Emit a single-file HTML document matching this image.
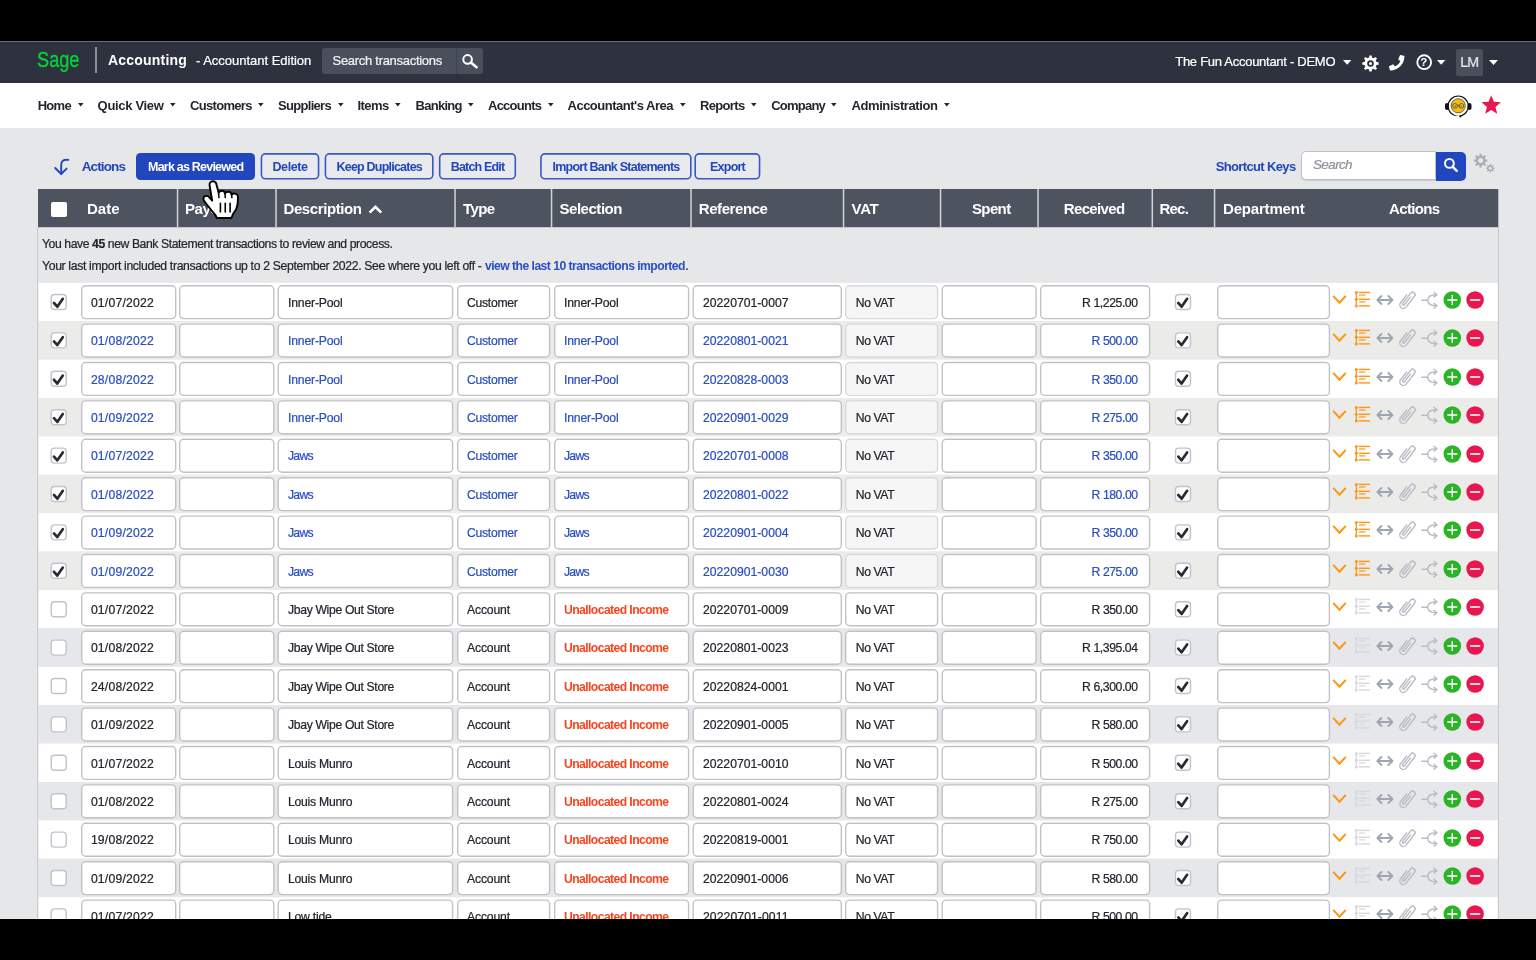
<!DOCTYPE html><html><head><meta charset="utf-8"><title>Sage Accounting - Bank Statements</title><style>
html,body{margin:0;padding:0}body{width:1536px;height:960px;background:#000;position:relative;overflow:hidden;font-family:"Liberation Sans",sans-serif}
.t{position:absolute;white-space:nowrap;line-height:1;margin:0;padding:0}
svg{position:absolute;overflow:visible}
</style></head><body><div style="position:absolute;left:0;top:0;width:1536px;height:960px;will-change:transform">
<div style="position:absolute;left:0.00px;top:41.00px;width:1536.00px;height:1.20px;background:#6d7078"></div>
<div style="position:absolute;left:0.00px;top:42.00px;width:1536.00px;height:41.00px;background:#2e323e"></div>
<div style="position:absolute;left:0.00px;top:83.00px;width:1536.00px;height:44.60px;background:#fff"></div>
<div style="position:absolute;left:0.00px;top:127.60px;width:1536.00px;height:791.40px;background:#e6e7e9"></div>
<div style="position:absolute;left:95.00px;top:47.00px;width:2.00px;height:26.00px;background:#8b8e96"></div>
<div style="position:absolute;left:321.75px;top:48.00px;width:161.25px;height:25.80px;background:#4a4f5c;border-radius:3px"></div>
<div style="position:absolute;left:456.00px;top:48.00px;width:1.00px;height:25.80px;background:#3f4350"></div>
<svg style="left:461px;top:53px" width="18" height="16" viewBox="0 0 18 16"><circle cx="6.6" cy="6.4" r="4.3" fill="none" stroke="#fff" stroke-width="2"/><path d="M9.9 9.6 L15.6 14.2" stroke="#fff" stroke-width="2.6" stroke-linecap="round"/></svg>
<svg style="left:1342.5px;top:59.6px" width="8.4" height="4.7" viewBox="0 0 8.4 4.7"><path d="M0 0 H8.4 L4.2 4.7 Z" fill="#fff"/></svg>
<svg style="left:1362px;top:54.5px" width="17" height="17" viewBox="0 0 17 17"><path d="M14.43 7.08 L16.62 7.34 L16.62 9.66 L14.43 9.92 L13.70 11.69 L15.06 13.42 L13.42 15.06 L11.69 13.70 L9.92 14.43 L9.66 16.62 L7.34 16.62 L7.08 14.43 L5.31 13.70 L3.58 15.06 L1.94 13.42 L3.30 11.69 L2.57 9.92 L0.38 9.66 L0.38 7.34 L2.57 7.08 L3.30 5.31 L1.94 3.58 L3.58 1.94 L5.31 3.30 L7.08 2.57 L7.34 0.38 L9.66 0.38 L9.92 2.57 L11.69 3.30 L13.42 1.94 L15.06 3.58 L13.70 5.31Z" fill="#fff"/><circle cx="8.5" cy="8.5" r="3.3" fill="#2e323e"/><circle cx="8.5" cy="8.5" r="1.5" fill="#fff"/></svg>
<svg style="left:1388.8px;top:55px" width="15.4" height="15.4" viewBox="0 0 512 512"><path fill="#fff" d="M497.4 361.8l-112-48a24 24 0 0 0-28 6.9l-49.6 60.6A370.7 370.7 0 0 1 130.6 204.1l60.6-49.6a23.9 23.9 0 0 0 6.9-28l-48-112A24.2 24.2 0 0 0 122.6.6l-104 24A24 24 0 0 0 0 48c0 256.5 207.9 464 464 464a24 24 0 0 0 23.4-18.6l24-104a24.3 24.3 0 0 0-14-27.6z" transform="translate(512 0) scale(-1 1)"/></svg>
<svg style="left:1415.5px;top:54px" width="16.4" height="16.4" viewBox="0 0 16.4 16.4"><circle cx="8.2" cy="8.2" r="6.9" fill="none" stroke="#fff" stroke-width="1.9"/></svg>
<svg style="left:1436.8px;top:59.6px" width="8.4" height="4.7" viewBox="0 0 8.4 4.7"><path d="M0 0 H8.4 L4.2 4.7 Z" fill="#fff"/></svg>
<div style="position:absolute;left:1455.75px;top:48.75px;width:27.00px;height:26.75px;background:#4b4f5b;border-radius:2px"></div>
<svg style="left:1489.4px;top:59.6px" width="9" height="4.9" viewBox="0 0 9 4.9"><path d="M0 0 H9 L4.5 4.9 Z" fill="#fff"/></svg>
<svg style="left:78px;top:102.6px" width="5.6" height="3.4" viewBox="0 0 5.6 3.4"><path d="M0 0 H5.6 L2.8 3.4 Z" fill="#23262e"/></svg>
<svg style="left:170px;top:102.6px" width="5.6" height="3.4" viewBox="0 0 5.6 3.4"><path d="M0 0 H5.6 L2.8 3.4 Z" fill="#23262e"/></svg>
<svg style="left:258px;top:102.6px" width="5.6" height="3.4" viewBox="0 0 5.6 3.4"><path d="M0 0 H5.6 L2.8 3.4 Z" fill="#23262e"/></svg>
<svg style="left:337.5px;top:102.6px" width="5.6" height="3.4" viewBox="0 0 5.6 3.4"><path d="M0 0 H5.6 L2.8 3.4 Z" fill="#23262e"/></svg>
<svg style="left:395px;top:102.6px" width="5.6" height="3.4" viewBox="0 0 5.6 3.4"><path d="M0 0 H5.6 L2.8 3.4 Z" fill="#23262e"/></svg>
<svg style="left:468px;top:102.6px" width="5.6" height="3.4" viewBox="0 0 5.6 3.4"><path d="M0 0 H5.6 L2.8 3.4 Z" fill="#23262e"/></svg>
<svg style="left:548px;top:102.6px" width="5.6" height="3.4" viewBox="0 0 5.6 3.4"><path d="M0 0 H5.6 L2.8 3.4 Z" fill="#23262e"/></svg>
<svg style="left:679.5px;top:102.6px" width="5.6" height="3.4" viewBox="0 0 5.6 3.4"><path d="M0 0 H5.6 L2.8 3.4 Z" fill="#23262e"/></svg>
<svg style="left:751px;top:102.6px" width="5.6" height="3.4" viewBox="0 0 5.6 3.4"><path d="M0 0 H5.6 L2.8 3.4 Z" fill="#23262e"/></svg>
<svg style="left:831px;top:102.6px" width="5.6" height="3.4" viewBox="0 0 5.6 3.4"><path d="M0 0 H5.6 L2.8 3.4 Z" fill="#23262e"/></svg>
<svg style="left:943.5px;top:102.6px" width="5.6" height="3.4" viewBox="0 0 5.6 3.4"><path d="M0 0 H5.6 L2.8 3.4 Z" fill="#23262e"/></svg>
<svg style="left:1444px;top:93.5px" width="29" height="24" viewBox="1444 93.5 29 24">
<circle cx="1458.2" cy="105.6" r="10.1" fill="#fff" stroke="#111" stroke-width="1.2"/>
<rect x="1445" y="102.6" width="3.8" height="6.8" rx="1.9" fill="#111"/><rect x="1467.7" y="102.6" width="3.8" height="6.8" rx="1.9" fill="#111"/>
<path d="M1447.2 111.4 A10.1 10.1 0 0 0 1460 115.6" fill="none" stroke="#fff" stroke-width="2.2"/>
<circle cx="1458.2" cy="105.3" r="7.1" fill="#f6bd0c" stroke="#3a3320" stroke-width="0.7"/>
<circle cx="1455" cy="105.4" r="2.3" fill="#f9cf3c" stroke="#3a3a44" stroke-width="0.8"/><circle cx="1461.4" cy="105.4" r="2.3" fill="#f9cf3c" stroke="#3a3a44" stroke-width="0.8"/>
<path d="M1457.3 105.2 H1459.1" stroke="#3a3a44" stroke-width="0.8"/><circle cx="1455.2" cy="105.5" r="0.7" fill="#333"/><circle cx="1461.2" cy="105.5" r="0.7" fill="#333"/>
<circle cx="1460.3" cy="115.8" r="1.1" fill="#111"/>
</svg>
<svg style="left:0;top:0" width="1536" height="130"><path d="M1491.20 95.30 L1493.85 101.86 L1500.90 102.35 L1495.48 106.89 L1497.20 113.75 L1491.20 110.00 L1485.20 113.75 L1486.92 106.89 L1481.50 102.35 L1488.55 101.86Z" fill="#e8174f"/></svg>
<svg style="left:52.2px;top:157px" width="19" height="20" viewBox="0 0 19 20"><path d="M16.4 2.9 C10.6 2.3 9.2 4.8 9.2 8 V16.6" fill="none" stroke="#2146bd" stroke-width="1.9" stroke-linecap="round"/><path d="M3.2 11 L9.2 17 L14.6 11.6" fill="none" stroke="#2146bd" stroke-width="1.9" stroke-linecap="round" stroke-linejoin="round"/></svg>
<div style="position:absolute;left:136.00px;top:152.80px;width:119.00px;height:27.00px;background:#2146bd;border-radius:4.5px"></div>
<svg style="left:0;top:0" width="1536" height="200"><rect x="261.45" y="153.85" width="57.10" height="24.90" rx="4" fill="#e9eaed" stroke="#3856c6" stroke-width="1.6"/></svg>
<svg style="left:0;top:0" width="1536" height="200"><rect x="325.45" y="153.85" width="107.35" height="24.90" rx="4" fill="#e9eaed" stroke="#3856c6" stroke-width="1.6"/></svg>
<svg style="left:0;top:0" width="1536" height="200"><rect x="439.70" y="153.85" width="75.60" height="24.90" rx="4" fill="#e9eaed" stroke="#3856c6" stroke-width="1.6"/></svg>
<svg style="left:0;top:0" width="1536" height="200"><rect x="540.95" y="153.85" width="149.85" height="24.90" rx="4" fill="#e9eaed" stroke="#3856c6" stroke-width="1.6"/></svg>
<svg style="left:0;top:0" width="1536" height="200"><rect x="695.20" y="153.85" width="64.35" height="24.90" rx="4" fill="#e9eaed" stroke="#3856c6" stroke-width="1.6"/></svg>
<div style="position:absolute;left:1301.30px;top:151.30px;width:135.00px;height:28.60px;box-sizing:border-box;background:#fff;border:1px solid #bfc0c4;border-radius:5px 0 0 5px;box-shadow:0 1px 1px rgba(0,0,0,.12)"></div>
<div style="position:absolute;left:1435.75px;top:152.10px;width:29.75px;height:28.70px;background:#2146bd;border-radius:0 5px 5px 0"></div>
<svg style="left:1442.5px;top:157.4px" width="16" height="16" viewBox="0 0 16 16"><circle cx="6.4" cy="6.4" r="4.4" fill="none" stroke="#fff" stroke-width="2"/><path d="M9.8 9.8 L13.8 13.8" stroke="#fff" stroke-width="2.4" stroke-linecap="round"/></svg>
<svg style="left:1473px;top:152.7px" width="22" height="21" viewBox="0 0 22 21"><path d="M12.46 6.43 L14.43 6.63 L14.43 8.57 L12.46 8.77 L11.86 10.21 L13.12 11.74 L11.74 13.12 L10.21 11.86 L8.77 12.46 L8.57 14.43 L6.63 14.43 L6.43 12.46 L4.99 11.86 L3.46 13.12 L2.08 11.74 L3.34 10.21 L2.74 8.77 L0.77 8.57 L0.77 6.63 L2.74 6.43 L3.34 4.99 L2.08 3.46 L3.46 2.08 L4.99 3.34 L6.43 2.74 L6.63 0.77 L8.57 0.77 L8.77 2.74 L10.21 3.34 L11.74 2.08 L13.12 3.46 L11.86 4.99Z" fill="#a9adb5"/><circle cx="7.6" cy="7.6" r="2.5" fill="#e6e7e9"/><path d="M20.22 14.50 L21.56 14.59 L21.56 15.81 L20.22 15.90 L19.86 16.77 L20.74 17.78 L19.88 18.64 L18.87 17.76 L18.00 18.12 L17.91 19.46 L16.69 19.46 L16.60 18.12 L15.73 17.76 L14.72 18.64 L13.86 17.78 L14.74 16.77 L14.38 15.90 L13.04 15.81 L13.04 14.59 L14.38 14.50 L14.74 13.63 L13.86 12.62 L14.72 11.76 L15.73 12.64 L16.60 12.28 L16.69 10.94 L17.91 10.94 L18.00 12.28 L18.87 12.64 L19.88 11.76 L20.74 12.62 L19.86 13.63Z" fill="#a9adb5"/><circle cx="17.3" cy="15.2" r="1.5" fill="#e6e7e9"/></svg>
<svg style="left:0;top:0" width="1536" height="240"><rect x="38" y="189" width="1460.30" height="38.2" fill="#4e5360"/><rect x="176.80" y="189" width="1.5" height="38" fill="#d2d4d9"/><rect x="275.30" y="189" width="1.5" height="38" fill="#d2d4d9"/><rect x="454.30" y="189" width="1.5" height="38" fill="#d2d4d9"/><rect x="550.80" y="189" width="1.5" height="38" fill="#d2d4d9"/><rect x="690.30" y="189" width="1.5" height="38" fill="#d2d4d9"/><rect x="842.80" y="189" width="1.5" height="38" fill="#d2d4d9"/><rect x="939.80" y="189" width="1.5" height="38" fill="#d2d4d9"/><rect x="1037.30" y="189" width="1.5" height="38" fill="#d2d4d9"/><rect x="1151.55" y="189" width="1.5" height="38" fill="#d2d4d9"/><rect x="1213.80" y="189" width="1.5" height="38" fill="#d2d4d9"/></svg>
<div style="position:absolute;left:37.20px;top:227.00px;width:1.20px;height:692.00px;background:#cbccd1"></div>
<div style="position:absolute;left:1497.70px;top:227.00px;width:1.20px;height:692.00px;background:#c5c7cc"></div>
<div style="position:absolute;left:51.00px;top:201.50px;width:15.50px;height:15.50px;background:#fff;border-radius:2px"></div>
<svg style="left:367px;top:203px" width="17" height="12" viewBox="0 0 17 12"><path d="M2.6 9.6 L8.4 3.8 L14.2 9.6" fill="none" stroke="#fff" stroke-width="2.7"/></svg>
<svg style="left:0;top:0" width="1536" height="960" viewBox="0 0 1536 960"><rect x="38.70" y="282.80" width="1459.00" height="38.40" fill="#fff"/><rect x="81.70" y="285.70" width="94.00" height="32.90" rx="4" fill="#fff" stroke="#c2c2c4" stroke-width="1.4"/><rect x="179.70" y="285.70" width="94.15" height="32.90" rx="4" fill="#fff" stroke="#c2c2c4" stroke-width="1.4"/><rect x="278.20" y="285.70" width="174.40" height="32.90" rx="4" fill="#fff" stroke="#c2c2c4" stroke-width="1.4"/><rect x="457.70" y="285.70" width="91.90" height="32.90" rx="4" fill="#fff" stroke="#c2c2c4" stroke-width="1.4"/><rect x="554.70" y="285.70" width="133.90" height="32.90" rx="4" fill="#fff" stroke="#c2c2c4" stroke-width="1.4"/><rect x="693.20" y="285.70" width="148.15" height="32.90" rx="4" fill="#fff" stroke="#c2c2c4" stroke-width="1.4"/><rect x="845.70" y="285.70" width="91.90" height="32.90" rx="4" fill="#f6f6f6" stroke="#d8d9db" stroke-width="1.4"/><rect x="942.20" y="285.70" width="93.90" height="32.90" rx="4" fill="#fff" stroke="#c2c2c4" stroke-width="1.4"/><rect x="1040.70" y="285.70" width="108.90" height="32.90" rx="4" fill="#fff" stroke="#c2c2c4" stroke-width="1.4"/><rect x="1217.70" y="285.70" width="111.70" height="32.90" rx="4" fill="#fff" stroke="#c2c2c4" stroke-width="1.4"/><rect x="51.20" y="294.50" width="15.00" height="15.00" rx="3.3" fill="#fff" stroke="#c0c3cb" stroke-width="1.4"/><path transform="translate(50.5 293.80)" d="M3.5 9.2 L6.8 12.9 L12.3 5" fill="none" stroke="#2a2b30" stroke-width="2.7" stroke-linejoin="round" stroke-linecap="round"/><rect x="1175.50" y="294.50" width="15.00" height="15.00" rx="3.3" fill="#fff" stroke="#c0c3cb" stroke-width="1.4"/><path transform="translate(1174.8 293.80)" d="M3.5 9.2 L6.8 12.9 L12.3 5" fill="none" stroke="#2a2b30" stroke-width="2.7" stroke-linejoin="round" stroke-linecap="round"/><rect x="38.70" y="321.20" width="1459.00" height="38.40" fill="#ebebe9"/><rect x="81.70" y="324.10" width="94.00" height="32.90" rx="4" fill="#fff" stroke="#c2c2c4" stroke-width="1.4"/><rect x="179.70" y="324.10" width="94.15" height="32.90" rx="4" fill="#fff" stroke="#c2c2c4" stroke-width="1.4"/><rect x="278.20" y="324.10" width="174.40" height="32.90" rx="4" fill="#fff" stroke="#c2c2c4" stroke-width="1.4"/><rect x="457.70" y="324.10" width="91.90" height="32.90" rx="4" fill="#fff" stroke="#c2c2c4" stroke-width="1.4"/><rect x="554.70" y="324.10" width="133.90" height="32.90" rx="4" fill="#fff" stroke="#c2c2c4" stroke-width="1.4"/><rect x="693.20" y="324.10" width="148.15" height="32.90" rx="4" fill="#fff" stroke="#c2c2c4" stroke-width="1.4"/><rect x="845.70" y="324.10" width="91.90" height="32.90" rx="4" fill="#f6f6f6" stroke="#d8d9db" stroke-width="1.4"/><rect x="942.20" y="324.10" width="93.90" height="32.90" rx="4" fill="#fff" stroke="#c2c2c4" stroke-width="1.4"/><rect x="1040.70" y="324.10" width="108.90" height="32.90" rx="4" fill="#fff" stroke="#c2c2c4" stroke-width="1.4"/><rect x="1217.70" y="324.10" width="111.70" height="32.90" rx="4" fill="#fff" stroke="#c2c2c4" stroke-width="1.4"/><rect x="51.20" y="332.90" width="15.00" height="15.00" rx="3.3" fill="#fff" stroke="#c0c3cb" stroke-width="1.4"/><path transform="translate(50.5 332.20)" d="M3.5 9.2 L6.8 12.9 L12.3 5" fill="none" stroke="#2a2b30" stroke-width="2.7" stroke-linejoin="round" stroke-linecap="round"/><rect x="1175.50" y="332.90" width="15.00" height="15.00" rx="3.3" fill="#fff" stroke="#c0c3cb" stroke-width="1.4"/><path transform="translate(1174.8 332.20)" d="M3.5 9.2 L6.8 12.9 L12.3 5" fill="none" stroke="#2a2b30" stroke-width="2.7" stroke-linejoin="round" stroke-linecap="round"/><rect x="38.70" y="359.60" width="1459.00" height="38.40" fill="#fff"/><rect x="81.70" y="362.50" width="94.00" height="32.90" rx="4" fill="#fff" stroke="#c2c2c4" stroke-width="1.4"/><rect x="179.70" y="362.50" width="94.15" height="32.90" rx="4" fill="#fff" stroke="#c2c2c4" stroke-width="1.4"/><rect x="278.20" y="362.50" width="174.40" height="32.90" rx="4" fill="#fff" stroke="#c2c2c4" stroke-width="1.4"/><rect x="457.70" y="362.50" width="91.90" height="32.90" rx="4" fill="#fff" stroke="#c2c2c4" stroke-width="1.4"/><rect x="554.70" y="362.50" width="133.90" height="32.90" rx="4" fill="#fff" stroke="#c2c2c4" stroke-width="1.4"/><rect x="693.20" y="362.50" width="148.15" height="32.90" rx="4" fill="#fff" stroke="#c2c2c4" stroke-width="1.4"/><rect x="845.70" y="362.50" width="91.90" height="32.90" rx="4" fill="#f6f6f6" stroke="#d8d9db" stroke-width="1.4"/><rect x="942.20" y="362.50" width="93.90" height="32.90" rx="4" fill="#fff" stroke="#c2c2c4" stroke-width="1.4"/><rect x="1040.70" y="362.50" width="108.90" height="32.90" rx="4" fill="#fff" stroke="#c2c2c4" stroke-width="1.4"/><rect x="1217.70" y="362.50" width="111.70" height="32.90" rx="4" fill="#fff" stroke="#c2c2c4" stroke-width="1.4"/><rect x="51.20" y="371.30" width="15.00" height="15.00" rx="3.3" fill="#fff" stroke="#c0c3cb" stroke-width="1.4"/><path transform="translate(50.5 370.60)" d="M3.5 9.2 L6.8 12.9 L12.3 5" fill="none" stroke="#2a2b30" stroke-width="2.7" stroke-linejoin="round" stroke-linecap="round"/><rect x="1175.50" y="371.30" width="15.00" height="15.00" rx="3.3" fill="#fff" stroke="#c0c3cb" stroke-width="1.4"/><path transform="translate(1174.8 370.60)" d="M3.5 9.2 L6.8 12.9 L12.3 5" fill="none" stroke="#2a2b30" stroke-width="2.7" stroke-linejoin="round" stroke-linecap="round"/><rect x="38.70" y="398.00" width="1459.00" height="38.40" fill="#ebebe9"/><rect x="81.70" y="400.90" width="94.00" height="32.90" rx="4" fill="#fff" stroke="#c2c2c4" stroke-width="1.4"/><rect x="179.70" y="400.90" width="94.15" height="32.90" rx="4" fill="#fff" stroke="#c2c2c4" stroke-width="1.4"/><rect x="278.20" y="400.90" width="174.40" height="32.90" rx="4" fill="#fff" stroke="#c2c2c4" stroke-width="1.4"/><rect x="457.70" y="400.90" width="91.90" height="32.90" rx="4" fill="#fff" stroke="#c2c2c4" stroke-width="1.4"/><rect x="554.70" y="400.90" width="133.90" height="32.90" rx="4" fill="#fff" stroke="#c2c2c4" stroke-width="1.4"/><rect x="693.20" y="400.90" width="148.15" height="32.90" rx="4" fill="#fff" stroke="#c2c2c4" stroke-width="1.4"/><rect x="845.70" y="400.90" width="91.90" height="32.90" rx="4" fill="#f6f6f6" stroke="#d8d9db" stroke-width="1.4"/><rect x="942.20" y="400.90" width="93.90" height="32.90" rx="4" fill="#fff" stroke="#c2c2c4" stroke-width="1.4"/><rect x="1040.70" y="400.90" width="108.90" height="32.90" rx="4" fill="#fff" stroke="#c2c2c4" stroke-width="1.4"/><rect x="1217.70" y="400.90" width="111.70" height="32.90" rx="4" fill="#fff" stroke="#c2c2c4" stroke-width="1.4"/><rect x="51.20" y="409.70" width="15.00" height="15.00" rx="3.3" fill="#fff" stroke="#c0c3cb" stroke-width="1.4"/><path transform="translate(50.5 409.00)" d="M3.5 9.2 L6.8 12.9 L12.3 5" fill="none" stroke="#2a2b30" stroke-width="2.7" stroke-linejoin="round" stroke-linecap="round"/><rect x="1175.50" y="409.70" width="15.00" height="15.00" rx="3.3" fill="#fff" stroke="#c0c3cb" stroke-width="1.4"/><path transform="translate(1174.8 409.00)" d="M3.5 9.2 L6.8 12.9 L12.3 5" fill="none" stroke="#2a2b30" stroke-width="2.7" stroke-linejoin="round" stroke-linecap="round"/><rect x="38.70" y="436.40" width="1459.00" height="38.40" fill="#fff"/><rect x="81.70" y="439.30" width="94.00" height="32.90" rx="4" fill="#fff" stroke="#c2c2c4" stroke-width="1.4"/><rect x="179.70" y="439.30" width="94.15" height="32.90" rx="4" fill="#fff" stroke="#c2c2c4" stroke-width="1.4"/><rect x="278.20" y="439.30" width="174.40" height="32.90" rx="4" fill="#fff" stroke="#c2c2c4" stroke-width="1.4"/><rect x="457.70" y="439.30" width="91.90" height="32.90" rx="4" fill="#fff" stroke="#c2c2c4" stroke-width="1.4"/><rect x="554.70" y="439.30" width="133.90" height="32.90" rx="4" fill="#fff" stroke="#c2c2c4" stroke-width="1.4"/><rect x="693.20" y="439.30" width="148.15" height="32.90" rx="4" fill="#fff" stroke="#c2c2c4" stroke-width="1.4"/><rect x="845.70" y="439.30" width="91.90" height="32.90" rx="4" fill="#f6f6f6" stroke="#d8d9db" stroke-width="1.4"/><rect x="942.20" y="439.30" width="93.90" height="32.90" rx="4" fill="#fff" stroke="#c2c2c4" stroke-width="1.4"/><rect x="1040.70" y="439.30" width="108.90" height="32.90" rx="4" fill="#fff" stroke="#c2c2c4" stroke-width="1.4"/><rect x="1217.70" y="439.30" width="111.70" height="32.90" rx="4" fill="#fff" stroke="#c2c2c4" stroke-width="1.4"/><rect x="51.20" y="448.10" width="15.00" height="15.00" rx="3.3" fill="#fff" stroke="#c0c3cb" stroke-width="1.4"/><path transform="translate(50.5 447.40)" d="M3.5 9.2 L6.8 12.9 L12.3 5" fill="none" stroke="#2a2b30" stroke-width="2.7" stroke-linejoin="round" stroke-linecap="round"/><rect x="1175.50" y="448.10" width="15.00" height="15.00" rx="3.3" fill="#fff" stroke="#c0c3cb" stroke-width="1.4"/><path transform="translate(1174.8 447.40)" d="M3.5 9.2 L6.8 12.9 L12.3 5" fill="none" stroke="#2a2b30" stroke-width="2.7" stroke-linejoin="round" stroke-linecap="round"/><rect x="38.70" y="474.80" width="1459.00" height="38.40" fill="#ebebe9"/><rect x="81.70" y="477.70" width="94.00" height="32.90" rx="4" fill="#fff" stroke="#c2c2c4" stroke-width="1.4"/><rect x="179.70" y="477.70" width="94.15" height="32.90" rx="4" fill="#fff" stroke="#c2c2c4" stroke-width="1.4"/><rect x="278.20" y="477.70" width="174.40" height="32.90" rx="4" fill="#fff" stroke="#c2c2c4" stroke-width="1.4"/><rect x="457.70" y="477.70" width="91.90" height="32.90" rx="4" fill="#fff" stroke="#c2c2c4" stroke-width="1.4"/><rect x="554.70" y="477.70" width="133.90" height="32.90" rx="4" fill="#fff" stroke="#c2c2c4" stroke-width="1.4"/><rect x="693.20" y="477.70" width="148.15" height="32.90" rx="4" fill="#fff" stroke="#c2c2c4" stroke-width="1.4"/><rect x="845.70" y="477.70" width="91.90" height="32.90" rx="4" fill="#f6f6f6" stroke="#d8d9db" stroke-width="1.4"/><rect x="942.20" y="477.70" width="93.90" height="32.90" rx="4" fill="#fff" stroke="#c2c2c4" stroke-width="1.4"/><rect x="1040.70" y="477.70" width="108.90" height="32.90" rx="4" fill="#fff" stroke="#c2c2c4" stroke-width="1.4"/><rect x="1217.70" y="477.70" width="111.70" height="32.90" rx="4" fill="#fff" stroke="#c2c2c4" stroke-width="1.4"/><rect x="51.20" y="486.50" width="15.00" height="15.00" rx="3.3" fill="#fff" stroke="#c0c3cb" stroke-width="1.4"/><path transform="translate(50.5 485.80)" d="M3.5 9.2 L6.8 12.9 L12.3 5" fill="none" stroke="#2a2b30" stroke-width="2.7" stroke-linejoin="round" stroke-linecap="round"/><rect x="1175.50" y="486.50" width="15.00" height="15.00" rx="3.3" fill="#fff" stroke="#c0c3cb" stroke-width="1.4"/><path transform="translate(1174.8 485.80)" d="M3.5 9.2 L6.8 12.9 L12.3 5" fill="none" stroke="#2a2b30" stroke-width="2.7" stroke-linejoin="round" stroke-linecap="round"/><rect x="38.70" y="513.20" width="1459.00" height="38.40" fill="#fff"/><rect x="81.70" y="516.10" width="94.00" height="32.90" rx="4" fill="#fff" stroke="#c2c2c4" stroke-width="1.4"/><rect x="179.70" y="516.10" width="94.15" height="32.90" rx="4" fill="#fff" stroke="#c2c2c4" stroke-width="1.4"/><rect x="278.20" y="516.10" width="174.40" height="32.90" rx="4" fill="#fff" stroke="#c2c2c4" stroke-width="1.4"/><rect x="457.70" y="516.10" width="91.90" height="32.90" rx="4" fill="#fff" stroke="#c2c2c4" stroke-width="1.4"/><rect x="554.70" y="516.10" width="133.90" height="32.90" rx="4" fill="#fff" stroke="#c2c2c4" stroke-width="1.4"/><rect x="693.20" y="516.10" width="148.15" height="32.90" rx="4" fill="#fff" stroke="#c2c2c4" stroke-width="1.4"/><rect x="845.70" y="516.10" width="91.90" height="32.90" rx="4" fill="#f6f6f6" stroke="#d8d9db" stroke-width="1.4"/><rect x="942.20" y="516.10" width="93.90" height="32.90" rx="4" fill="#fff" stroke="#c2c2c4" stroke-width="1.4"/><rect x="1040.70" y="516.10" width="108.90" height="32.90" rx="4" fill="#fff" stroke="#c2c2c4" stroke-width="1.4"/><rect x="1217.70" y="516.10" width="111.70" height="32.90" rx="4" fill="#fff" stroke="#c2c2c4" stroke-width="1.4"/><rect x="51.20" y="524.90" width="15.00" height="15.00" rx="3.3" fill="#fff" stroke="#c0c3cb" stroke-width="1.4"/><path transform="translate(50.5 524.20)" d="M3.5 9.2 L6.8 12.9 L12.3 5" fill="none" stroke="#2a2b30" stroke-width="2.7" stroke-linejoin="round" stroke-linecap="round"/><rect x="1175.50" y="524.90" width="15.00" height="15.00" rx="3.3" fill="#fff" stroke="#c0c3cb" stroke-width="1.4"/><path transform="translate(1174.8 524.20)" d="M3.5 9.2 L6.8 12.9 L12.3 5" fill="none" stroke="#2a2b30" stroke-width="2.7" stroke-linejoin="round" stroke-linecap="round"/><rect x="38.70" y="551.60" width="1459.00" height="38.40" fill="#ebebe9"/><rect x="81.70" y="554.50" width="94.00" height="32.90" rx="4" fill="#fff" stroke="#c2c2c4" stroke-width="1.4"/><rect x="179.70" y="554.50" width="94.15" height="32.90" rx="4" fill="#fff" stroke="#c2c2c4" stroke-width="1.4"/><rect x="278.20" y="554.50" width="174.40" height="32.90" rx="4" fill="#fff" stroke="#c2c2c4" stroke-width="1.4"/><rect x="457.70" y="554.50" width="91.90" height="32.90" rx="4" fill="#fff" stroke="#c2c2c4" stroke-width="1.4"/><rect x="554.70" y="554.50" width="133.90" height="32.90" rx="4" fill="#fff" stroke="#c2c2c4" stroke-width="1.4"/><rect x="693.20" y="554.50" width="148.15" height="32.90" rx="4" fill="#fff" stroke="#c2c2c4" stroke-width="1.4"/><rect x="845.70" y="554.50" width="91.90" height="32.90" rx="4" fill="#f6f6f6" stroke="#d8d9db" stroke-width="1.4"/><rect x="942.20" y="554.50" width="93.90" height="32.90" rx="4" fill="#fff" stroke="#c2c2c4" stroke-width="1.4"/><rect x="1040.70" y="554.50" width="108.90" height="32.90" rx="4" fill="#fff" stroke="#c2c2c4" stroke-width="1.4"/><rect x="1217.70" y="554.50" width="111.70" height="32.90" rx="4" fill="#fff" stroke="#c2c2c4" stroke-width="1.4"/><rect x="51.20" y="563.30" width="15.00" height="15.00" rx="3.3" fill="#fff" stroke="#c0c3cb" stroke-width="1.4"/><path transform="translate(50.5 562.60)" d="M3.5 9.2 L6.8 12.9 L12.3 5" fill="none" stroke="#2a2b30" stroke-width="2.7" stroke-linejoin="round" stroke-linecap="round"/><rect x="1175.50" y="563.30" width="15.00" height="15.00" rx="3.3" fill="#fff" stroke="#c0c3cb" stroke-width="1.4"/><path transform="translate(1174.8 562.60)" d="M3.5 9.2 L6.8 12.9 L12.3 5" fill="none" stroke="#2a2b30" stroke-width="2.7" stroke-linejoin="round" stroke-linecap="round"/><rect x="38.70" y="590.00" width="1459.00" height="38.40" fill="#fff"/><rect x="81.70" y="592.90" width="94.00" height="32.90" rx="4" fill="#fff" stroke="#c2c2c4" stroke-width="1.4"/><rect x="179.70" y="592.90" width="94.15" height="32.90" rx="4" fill="#fff" stroke="#c2c2c4" stroke-width="1.4"/><rect x="278.20" y="592.90" width="174.40" height="32.90" rx="4" fill="#fff" stroke="#c2c2c4" stroke-width="1.4"/><rect x="457.70" y="592.90" width="91.90" height="32.90" rx="4" fill="#fff" stroke="#c2c2c4" stroke-width="1.4"/><rect x="554.70" y="592.90" width="133.90" height="32.90" rx="4" fill="#fff" stroke="#c2c2c4" stroke-width="1.4"/><rect x="693.20" y="592.90" width="148.15" height="32.90" rx="4" fill="#fff" stroke="#c2c2c4" stroke-width="1.4"/><rect x="845.70" y="592.90" width="91.90" height="32.90" rx="4" fill="#fff" stroke="#c2c2c4" stroke-width="1.4"/><rect x="942.20" y="592.90" width="93.90" height="32.90" rx="4" fill="#fff" stroke="#c2c2c4" stroke-width="1.4"/><rect x="1040.70" y="592.90" width="108.90" height="32.90" rx="4" fill="#fff" stroke="#c2c2c4" stroke-width="1.4"/><rect x="1217.70" y="592.90" width="111.70" height="32.90" rx="4" fill="#fff" stroke="#c2c2c4" stroke-width="1.4"/><rect x="51.20" y="601.70" width="15.00" height="15.00" rx="3.3" fill="#fff" stroke="#c0c3cb" stroke-width="1.4"/><rect x="1175.50" y="601.70" width="15.00" height="15.00" rx="3.3" fill="#fff" stroke="#c0c3cb" stroke-width="1.4"/><path transform="translate(1174.8 601.00)" d="M3.5 9.2 L6.8 12.9 L12.3 5" fill="none" stroke="#2a2b30" stroke-width="2.7" stroke-linejoin="round" stroke-linecap="round"/><rect x="38.70" y="628.40" width="1459.00" height="38.40" fill="#e5e7ea"/><rect x="81.70" y="631.30" width="94.00" height="32.90" rx="4" fill="#fff" stroke="#c2c2c4" stroke-width="1.4"/><rect x="179.70" y="631.30" width="94.15" height="32.90" rx="4" fill="#fff" stroke="#c2c2c4" stroke-width="1.4"/><rect x="278.20" y="631.30" width="174.40" height="32.90" rx="4" fill="#fff" stroke="#c2c2c4" stroke-width="1.4"/><rect x="457.70" y="631.30" width="91.90" height="32.90" rx="4" fill="#fff" stroke="#c2c2c4" stroke-width="1.4"/><rect x="554.70" y="631.30" width="133.90" height="32.90" rx="4" fill="#fff" stroke="#c2c2c4" stroke-width="1.4"/><rect x="693.20" y="631.30" width="148.15" height="32.90" rx="4" fill="#fff" stroke="#c2c2c4" stroke-width="1.4"/><rect x="845.70" y="631.30" width="91.90" height="32.90" rx="4" fill="#fff" stroke="#c2c2c4" stroke-width="1.4"/><rect x="942.20" y="631.30" width="93.90" height="32.90" rx="4" fill="#fff" stroke="#c2c2c4" stroke-width="1.4"/><rect x="1040.70" y="631.30" width="108.90" height="32.90" rx="4" fill="#fff" stroke="#c2c2c4" stroke-width="1.4"/><rect x="1217.70" y="631.30" width="111.70" height="32.90" rx="4" fill="#fff" stroke="#c2c2c4" stroke-width="1.4"/><rect x="51.20" y="640.10" width="15.00" height="15.00" rx="3.3" fill="#fff" stroke="#c0c3cb" stroke-width="1.4"/><rect x="1175.50" y="640.10" width="15.00" height="15.00" rx="3.3" fill="#fff" stroke="#c0c3cb" stroke-width="1.4"/><path transform="translate(1174.8 639.40)" d="M3.5 9.2 L6.8 12.9 L12.3 5" fill="none" stroke="#2a2b30" stroke-width="2.7" stroke-linejoin="round" stroke-linecap="round"/><rect x="38.70" y="666.80" width="1459.00" height="38.40" fill="#fff"/><rect x="81.70" y="669.70" width="94.00" height="32.90" rx="4" fill="#fff" stroke="#c2c2c4" stroke-width="1.4"/><rect x="179.70" y="669.70" width="94.15" height="32.90" rx="4" fill="#fff" stroke="#c2c2c4" stroke-width="1.4"/><rect x="278.20" y="669.70" width="174.40" height="32.90" rx="4" fill="#fff" stroke="#c2c2c4" stroke-width="1.4"/><rect x="457.70" y="669.70" width="91.90" height="32.90" rx="4" fill="#fff" stroke="#c2c2c4" stroke-width="1.4"/><rect x="554.70" y="669.70" width="133.90" height="32.90" rx="4" fill="#fff" stroke="#c2c2c4" stroke-width="1.4"/><rect x="693.20" y="669.70" width="148.15" height="32.90" rx="4" fill="#fff" stroke="#c2c2c4" stroke-width="1.4"/><rect x="845.70" y="669.70" width="91.90" height="32.90" rx="4" fill="#fff" stroke="#c2c2c4" stroke-width="1.4"/><rect x="942.20" y="669.70" width="93.90" height="32.90" rx="4" fill="#fff" stroke="#c2c2c4" stroke-width="1.4"/><rect x="1040.70" y="669.70" width="108.90" height="32.90" rx="4" fill="#fff" stroke="#c2c2c4" stroke-width="1.4"/><rect x="1217.70" y="669.70" width="111.70" height="32.90" rx="4" fill="#fff" stroke="#c2c2c4" stroke-width="1.4"/><rect x="51.20" y="678.50" width="15.00" height="15.00" rx="3.3" fill="#fff" stroke="#c0c3cb" stroke-width="1.4"/><rect x="1175.50" y="678.50" width="15.00" height="15.00" rx="3.3" fill="#fff" stroke="#c0c3cb" stroke-width="1.4"/><path transform="translate(1174.8 677.80)" d="M3.5 9.2 L6.8 12.9 L12.3 5" fill="none" stroke="#2a2b30" stroke-width="2.7" stroke-linejoin="round" stroke-linecap="round"/><rect x="38.70" y="705.20" width="1459.00" height="38.40" fill="#e5e7ea"/><rect x="81.70" y="708.10" width="94.00" height="32.90" rx="4" fill="#fff" stroke="#c2c2c4" stroke-width="1.4"/><rect x="179.70" y="708.10" width="94.15" height="32.90" rx="4" fill="#fff" stroke="#c2c2c4" stroke-width="1.4"/><rect x="278.20" y="708.10" width="174.40" height="32.90" rx="4" fill="#fff" stroke="#c2c2c4" stroke-width="1.4"/><rect x="457.70" y="708.10" width="91.90" height="32.90" rx="4" fill="#fff" stroke="#c2c2c4" stroke-width="1.4"/><rect x="554.70" y="708.10" width="133.90" height="32.90" rx="4" fill="#fff" stroke="#c2c2c4" stroke-width="1.4"/><rect x="693.20" y="708.10" width="148.15" height="32.90" rx="4" fill="#fff" stroke="#c2c2c4" stroke-width="1.4"/><rect x="845.70" y="708.10" width="91.90" height="32.90" rx="4" fill="#fff" stroke="#c2c2c4" stroke-width="1.4"/><rect x="942.20" y="708.10" width="93.90" height="32.90" rx="4" fill="#fff" stroke="#c2c2c4" stroke-width="1.4"/><rect x="1040.70" y="708.10" width="108.90" height="32.90" rx="4" fill="#fff" stroke="#c2c2c4" stroke-width="1.4"/><rect x="1217.70" y="708.10" width="111.70" height="32.90" rx="4" fill="#fff" stroke="#c2c2c4" stroke-width="1.4"/><rect x="51.20" y="716.90" width="15.00" height="15.00" rx="3.3" fill="#fff" stroke="#c0c3cb" stroke-width="1.4"/><rect x="1175.50" y="716.90" width="15.00" height="15.00" rx="3.3" fill="#fff" stroke="#c0c3cb" stroke-width="1.4"/><path transform="translate(1174.8 716.20)" d="M3.5 9.2 L6.8 12.9 L12.3 5" fill="none" stroke="#2a2b30" stroke-width="2.7" stroke-linejoin="round" stroke-linecap="round"/><rect x="38.70" y="743.60" width="1459.00" height="38.40" fill="#fff"/><rect x="81.70" y="746.50" width="94.00" height="32.90" rx="4" fill="#fff" stroke="#c2c2c4" stroke-width="1.4"/><rect x="179.70" y="746.50" width="94.15" height="32.90" rx="4" fill="#fff" stroke="#c2c2c4" stroke-width="1.4"/><rect x="278.20" y="746.50" width="174.40" height="32.90" rx="4" fill="#fff" stroke="#c2c2c4" stroke-width="1.4"/><rect x="457.70" y="746.50" width="91.90" height="32.90" rx="4" fill="#fff" stroke="#c2c2c4" stroke-width="1.4"/><rect x="554.70" y="746.50" width="133.90" height="32.90" rx="4" fill="#fff" stroke="#c2c2c4" stroke-width="1.4"/><rect x="693.20" y="746.50" width="148.15" height="32.90" rx="4" fill="#fff" stroke="#c2c2c4" stroke-width="1.4"/><rect x="845.70" y="746.50" width="91.90" height="32.90" rx="4" fill="#fff" stroke="#c2c2c4" stroke-width="1.4"/><rect x="942.20" y="746.50" width="93.90" height="32.90" rx="4" fill="#fff" stroke="#c2c2c4" stroke-width="1.4"/><rect x="1040.70" y="746.50" width="108.90" height="32.90" rx="4" fill="#fff" stroke="#c2c2c4" stroke-width="1.4"/><rect x="1217.70" y="746.50" width="111.70" height="32.90" rx="4" fill="#fff" stroke="#c2c2c4" stroke-width="1.4"/><rect x="51.20" y="755.30" width="15.00" height="15.00" rx="3.3" fill="#fff" stroke="#c0c3cb" stroke-width="1.4"/><rect x="1175.50" y="755.30" width="15.00" height="15.00" rx="3.3" fill="#fff" stroke="#c0c3cb" stroke-width="1.4"/><path transform="translate(1174.8 754.60)" d="M3.5 9.2 L6.8 12.9 L12.3 5" fill="none" stroke="#2a2b30" stroke-width="2.7" stroke-linejoin="round" stroke-linecap="round"/><rect x="38.70" y="782.00" width="1459.00" height="38.40" fill="#e5e7ea"/><rect x="81.70" y="784.90" width="94.00" height="32.90" rx="4" fill="#fff" stroke="#c2c2c4" stroke-width="1.4"/><rect x="179.70" y="784.90" width="94.15" height="32.90" rx="4" fill="#fff" stroke="#c2c2c4" stroke-width="1.4"/><rect x="278.20" y="784.90" width="174.40" height="32.90" rx="4" fill="#fff" stroke="#c2c2c4" stroke-width="1.4"/><rect x="457.70" y="784.90" width="91.90" height="32.90" rx="4" fill="#fff" stroke="#c2c2c4" stroke-width="1.4"/><rect x="554.70" y="784.90" width="133.90" height="32.90" rx="4" fill="#fff" stroke="#c2c2c4" stroke-width="1.4"/><rect x="693.20" y="784.90" width="148.15" height="32.90" rx="4" fill="#fff" stroke="#c2c2c4" stroke-width="1.4"/><rect x="845.70" y="784.90" width="91.90" height="32.90" rx="4" fill="#fff" stroke="#c2c2c4" stroke-width="1.4"/><rect x="942.20" y="784.90" width="93.90" height="32.90" rx="4" fill="#fff" stroke="#c2c2c4" stroke-width="1.4"/><rect x="1040.70" y="784.90" width="108.90" height="32.90" rx="4" fill="#fff" stroke="#c2c2c4" stroke-width="1.4"/><rect x="1217.70" y="784.90" width="111.70" height="32.90" rx="4" fill="#fff" stroke="#c2c2c4" stroke-width="1.4"/><rect x="51.20" y="793.70" width="15.00" height="15.00" rx="3.3" fill="#fff" stroke="#c0c3cb" stroke-width="1.4"/><rect x="1175.50" y="793.70" width="15.00" height="15.00" rx="3.3" fill="#fff" stroke="#c0c3cb" stroke-width="1.4"/><path transform="translate(1174.8 793.00)" d="M3.5 9.2 L6.8 12.9 L12.3 5" fill="none" stroke="#2a2b30" stroke-width="2.7" stroke-linejoin="round" stroke-linecap="round"/><rect x="38.70" y="820.40" width="1459.00" height="38.40" fill="#fff"/><rect x="81.70" y="823.30" width="94.00" height="32.90" rx="4" fill="#fff" stroke="#c2c2c4" stroke-width="1.4"/><rect x="179.70" y="823.30" width="94.15" height="32.90" rx="4" fill="#fff" stroke="#c2c2c4" stroke-width="1.4"/><rect x="278.20" y="823.30" width="174.40" height="32.90" rx="4" fill="#fff" stroke="#c2c2c4" stroke-width="1.4"/><rect x="457.70" y="823.30" width="91.90" height="32.90" rx="4" fill="#fff" stroke="#c2c2c4" stroke-width="1.4"/><rect x="554.70" y="823.30" width="133.90" height="32.90" rx="4" fill="#fff" stroke="#c2c2c4" stroke-width="1.4"/><rect x="693.20" y="823.30" width="148.15" height="32.90" rx="4" fill="#fff" stroke="#c2c2c4" stroke-width="1.4"/><rect x="845.70" y="823.30" width="91.90" height="32.90" rx="4" fill="#fff" stroke="#c2c2c4" stroke-width="1.4"/><rect x="942.20" y="823.30" width="93.90" height="32.90" rx="4" fill="#fff" stroke="#c2c2c4" stroke-width="1.4"/><rect x="1040.70" y="823.30" width="108.90" height="32.90" rx="4" fill="#fff" stroke="#c2c2c4" stroke-width="1.4"/><rect x="1217.70" y="823.30" width="111.70" height="32.90" rx="4" fill="#fff" stroke="#c2c2c4" stroke-width="1.4"/><rect x="51.20" y="832.10" width="15.00" height="15.00" rx="3.3" fill="#fff" stroke="#c0c3cb" stroke-width="1.4"/><rect x="1175.50" y="832.10" width="15.00" height="15.00" rx="3.3" fill="#fff" stroke="#c0c3cb" stroke-width="1.4"/><path transform="translate(1174.8 831.40)" d="M3.5 9.2 L6.8 12.9 L12.3 5" fill="none" stroke="#2a2b30" stroke-width="2.7" stroke-linejoin="round" stroke-linecap="round"/><rect x="38.70" y="858.80" width="1459.00" height="38.40" fill="#e5e7ea"/><rect x="81.70" y="861.70" width="94.00" height="32.90" rx="4" fill="#fff" stroke="#c2c2c4" stroke-width="1.4"/><rect x="179.70" y="861.70" width="94.15" height="32.90" rx="4" fill="#fff" stroke="#c2c2c4" stroke-width="1.4"/><rect x="278.20" y="861.70" width="174.40" height="32.90" rx="4" fill="#fff" stroke="#c2c2c4" stroke-width="1.4"/><rect x="457.70" y="861.70" width="91.90" height="32.90" rx="4" fill="#fff" stroke="#c2c2c4" stroke-width="1.4"/><rect x="554.70" y="861.70" width="133.90" height="32.90" rx="4" fill="#fff" stroke="#c2c2c4" stroke-width="1.4"/><rect x="693.20" y="861.70" width="148.15" height="32.90" rx="4" fill="#fff" stroke="#c2c2c4" stroke-width="1.4"/><rect x="845.70" y="861.70" width="91.90" height="32.90" rx="4" fill="#fff" stroke="#c2c2c4" stroke-width="1.4"/><rect x="942.20" y="861.70" width="93.90" height="32.90" rx="4" fill="#fff" stroke="#c2c2c4" stroke-width="1.4"/><rect x="1040.70" y="861.70" width="108.90" height="32.90" rx="4" fill="#fff" stroke="#c2c2c4" stroke-width="1.4"/><rect x="1217.70" y="861.70" width="111.70" height="32.90" rx="4" fill="#fff" stroke="#c2c2c4" stroke-width="1.4"/><rect x="51.20" y="870.50" width="15.00" height="15.00" rx="3.3" fill="#fff" stroke="#c0c3cb" stroke-width="1.4"/><rect x="1175.50" y="870.50" width="15.00" height="15.00" rx="3.3" fill="#fff" stroke="#c0c3cb" stroke-width="1.4"/><path transform="translate(1174.8 869.80)" d="M3.5 9.2 L6.8 12.9 L12.3 5" fill="none" stroke="#2a2b30" stroke-width="2.7" stroke-linejoin="round" stroke-linecap="round"/><rect x="38.70" y="897.20" width="1459.00" height="38.40" fill="#fff"/><rect x="81.70" y="900.10" width="94.00" height="32.90" rx="4" fill="#fff" stroke="#c2c2c4" stroke-width="1.4"/><rect x="179.70" y="900.10" width="94.15" height="32.90" rx="4" fill="#fff" stroke="#c2c2c4" stroke-width="1.4"/><rect x="278.20" y="900.10" width="174.40" height="32.90" rx="4" fill="#fff" stroke="#c2c2c4" stroke-width="1.4"/><rect x="457.70" y="900.10" width="91.90" height="32.90" rx="4" fill="#fff" stroke="#c2c2c4" stroke-width="1.4"/><rect x="554.70" y="900.10" width="133.90" height="32.90" rx="4" fill="#fff" stroke="#c2c2c4" stroke-width="1.4"/><rect x="693.20" y="900.10" width="148.15" height="32.90" rx="4" fill="#fff" stroke="#c2c2c4" stroke-width="1.4"/><rect x="845.70" y="900.10" width="91.90" height="32.90" rx="4" fill="#fff" stroke="#c2c2c4" stroke-width="1.4"/><rect x="942.20" y="900.10" width="93.90" height="32.90" rx="4" fill="#fff" stroke="#c2c2c4" stroke-width="1.4"/><rect x="1040.70" y="900.10" width="108.90" height="32.90" rx="4" fill="#fff" stroke="#c2c2c4" stroke-width="1.4"/><rect x="1217.70" y="900.10" width="111.70" height="32.90" rx="4" fill="#fff" stroke="#c2c2c4" stroke-width="1.4"/><rect x="51.20" y="908.90" width="15.00" height="15.00" rx="3.3" fill="#fff" stroke="#c0c3cb" stroke-width="1.4"/><rect x="1175.50" y="908.90" width="15.00" height="15.00" rx="3.3" fill="#fff" stroke="#c0c3cb" stroke-width="1.4"/><path transform="translate(1174.8 908.20)" d="M3.5 9.2 L6.8 12.9 L12.3 5" fill="none" stroke="#2a2b30" stroke-width="2.7" stroke-linejoin="round" stroke-linecap="round"/></svg>
<svg style="left:1330px;top:288.00px" width="160" height="24" viewBox="0 0 160 24"><path d="M3.2 7.9 L9.5 14.7 L15.8 7.9" fill="none" stroke="#ff9515" stroke-width="2"/><path d="M26.3 4 V18.2" stroke="#ff9515" stroke-width="1.3" fill="none"/><circle cx="26.3" cy="4.4" r="1.5" fill="#ff9515"/><path d="M28.6 4.4 H40" stroke="#ff9515" stroke-width="1.4"/><circle cx="26.3" cy="11.3" r="1.5" fill="#ff9515"/><path d="M28.6 11.3 H40" stroke="#ff9515" stroke-width="1.4"/><circle cx="26.3" cy="17.9" r="1.5" fill="#ff9515"/><path d="M28.6 17.9 H40" stroke="#ff9515" stroke-width="1.4"/><path d="M29 7 H35.4" stroke="#ff9515" stroke-width="1.2"/><path d="M29 13.9 H35.4" stroke="#ff9515" stroke-width="1.2"/><path d="M47.6 12 H62.2 M51.4 8 L47.4 12 L51.4 16 M58.4 8 L62.4 12 L58.4 16" fill="none" stroke="#a0a6b1" stroke-width="1.9" stroke-linejoin="round" stroke-linecap="round"/><g transform="translate(77 12.2) rotate(38)" fill="none" stroke="#b8bcc5" stroke-width="1.4" stroke-linecap="round"><path d="M-3.5 -4 V6 a3.5 3.5 0 0 0 7 0 V-7.8 a2.45 2.45 0 0 0 -4.9 0 V5.2 a1.1 1.1 0 0 0 2.2 0 V-4.6"/></g><path d="M91.8 12.2 H97.8 M106.2 6.7 C100.6 6.7 97.8 8.9 97.8 12.2 C97.8 15.5 100.6 17.7 106.2 17.7 M104 4.3 L107 6.7 L104 9.1 M104 15.3 L107 17.7 L104 20.1" fill="none" stroke="#b8bcc5" stroke-width="1.4" stroke-linecap="round" stroke-linejoin="round"/><circle cx="122.3" cy="12" r="8.8" fill="#2cb327"/><path d="M117.3 12 H127.3 M122.3 7 V17" stroke="#fff" stroke-width="1.45"/><circle cx="145.1" cy="12" r="8.8" fill="#e8174f"/><path d="M140 12 H150.2" stroke="#fff" stroke-width="1.6"/></svg>
<svg style="left:1330px;top:326.40px" width="160" height="24" viewBox="0 0 160 24"><path d="M3.2 7.9 L9.5 14.7 L15.8 7.9" fill="none" stroke="#ff9515" stroke-width="2"/><path d="M26.3 4 V18.2" stroke="#ff9515" stroke-width="1.3" fill="none"/><circle cx="26.3" cy="4.4" r="1.5" fill="#ff9515"/><path d="M28.6 4.4 H40" stroke="#ff9515" stroke-width="1.4"/><circle cx="26.3" cy="11.3" r="1.5" fill="#ff9515"/><path d="M28.6 11.3 H40" stroke="#ff9515" stroke-width="1.4"/><circle cx="26.3" cy="17.9" r="1.5" fill="#ff9515"/><path d="M28.6 17.9 H40" stroke="#ff9515" stroke-width="1.4"/><path d="M29 7 H35.4" stroke="#ff9515" stroke-width="1.2"/><path d="M29 13.9 H35.4" stroke="#ff9515" stroke-width="1.2"/><path d="M47.6 12 H62.2 M51.4 8 L47.4 12 L51.4 16 M58.4 8 L62.4 12 L58.4 16" fill="none" stroke="#a0a6b1" stroke-width="1.9" stroke-linejoin="round" stroke-linecap="round"/><g transform="translate(77 12.2) rotate(38)" fill="none" stroke="#b8bcc5" stroke-width="1.4" stroke-linecap="round"><path d="M-3.5 -4 V6 a3.5 3.5 0 0 0 7 0 V-7.8 a2.45 2.45 0 0 0 -4.9 0 V5.2 a1.1 1.1 0 0 0 2.2 0 V-4.6"/></g><path d="M91.8 12.2 H97.8 M106.2 6.7 C100.6 6.7 97.8 8.9 97.8 12.2 C97.8 15.5 100.6 17.7 106.2 17.7 M104 4.3 L107 6.7 L104 9.1 M104 15.3 L107 17.7 L104 20.1" fill="none" stroke="#b8bcc5" stroke-width="1.4" stroke-linecap="round" stroke-linejoin="round"/><circle cx="122.3" cy="12" r="8.8" fill="#2cb327"/><path d="M117.3 12 H127.3 M122.3 7 V17" stroke="#fff" stroke-width="1.45"/><circle cx="145.1" cy="12" r="8.8" fill="#e8174f"/><path d="M140 12 H150.2" stroke="#fff" stroke-width="1.6"/></svg>
<svg style="left:1330px;top:364.80px" width="160" height="24" viewBox="0 0 160 24"><path d="M3.2 7.9 L9.5 14.7 L15.8 7.9" fill="none" stroke="#ff9515" stroke-width="2"/><path d="M26.3 4 V18.2" stroke="#ff9515" stroke-width="1.3" fill="none"/><circle cx="26.3" cy="4.4" r="1.5" fill="#ff9515"/><path d="M28.6 4.4 H40" stroke="#ff9515" stroke-width="1.4"/><circle cx="26.3" cy="11.3" r="1.5" fill="#ff9515"/><path d="M28.6 11.3 H40" stroke="#ff9515" stroke-width="1.4"/><circle cx="26.3" cy="17.9" r="1.5" fill="#ff9515"/><path d="M28.6 17.9 H40" stroke="#ff9515" stroke-width="1.4"/><path d="M29 7 H35.4" stroke="#ff9515" stroke-width="1.2"/><path d="M29 13.9 H35.4" stroke="#ff9515" stroke-width="1.2"/><path d="M47.6 12 H62.2 M51.4 8 L47.4 12 L51.4 16 M58.4 8 L62.4 12 L58.4 16" fill="none" stroke="#a0a6b1" stroke-width="1.9" stroke-linejoin="round" stroke-linecap="round"/><g transform="translate(77 12.2) rotate(38)" fill="none" stroke="#b8bcc5" stroke-width="1.4" stroke-linecap="round"><path d="M-3.5 -4 V6 a3.5 3.5 0 0 0 7 0 V-7.8 a2.45 2.45 0 0 0 -4.9 0 V5.2 a1.1 1.1 0 0 0 2.2 0 V-4.6"/></g><path d="M91.8 12.2 H97.8 M106.2 6.7 C100.6 6.7 97.8 8.9 97.8 12.2 C97.8 15.5 100.6 17.7 106.2 17.7 M104 4.3 L107 6.7 L104 9.1 M104 15.3 L107 17.7 L104 20.1" fill="none" stroke="#b8bcc5" stroke-width="1.4" stroke-linecap="round" stroke-linejoin="round"/><circle cx="122.3" cy="12" r="8.8" fill="#2cb327"/><path d="M117.3 12 H127.3 M122.3 7 V17" stroke="#fff" stroke-width="1.45"/><circle cx="145.1" cy="12" r="8.8" fill="#e8174f"/><path d="M140 12 H150.2" stroke="#fff" stroke-width="1.6"/></svg>
<svg style="left:1330px;top:403.20px" width="160" height="24" viewBox="0 0 160 24"><path d="M3.2 7.9 L9.5 14.7 L15.8 7.9" fill="none" stroke="#ff9515" stroke-width="2"/><path d="M26.3 4 V18.2" stroke="#ff9515" stroke-width="1.3" fill="none"/><circle cx="26.3" cy="4.4" r="1.5" fill="#ff9515"/><path d="M28.6 4.4 H40" stroke="#ff9515" stroke-width="1.4"/><circle cx="26.3" cy="11.3" r="1.5" fill="#ff9515"/><path d="M28.6 11.3 H40" stroke="#ff9515" stroke-width="1.4"/><circle cx="26.3" cy="17.9" r="1.5" fill="#ff9515"/><path d="M28.6 17.9 H40" stroke="#ff9515" stroke-width="1.4"/><path d="M29 7 H35.4" stroke="#ff9515" stroke-width="1.2"/><path d="M29 13.9 H35.4" stroke="#ff9515" stroke-width="1.2"/><path d="M47.6 12 H62.2 M51.4 8 L47.4 12 L51.4 16 M58.4 8 L62.4 12 L58.4 16" fill="none" stroke="#a0a6b1" stroke-width="1.9" stroke-linejoin="round" stroke-linecap="round"/><g transform="translate(77 12.2) rotate(38)" fill="none" stroke="#b8bcc5" stroke-width="1.4" stroke-linecap="round"><path d="M-3.5 -4 V6 a3.5 3.5 0 0 0 7 0 V-7.8 a2.45 2.45 0 0 0 -4.9 0 V5.2 a1.1 1.1 0 0 0 2.2 0 V-4.6"/></g><path d="M91.8 12.2 H97.8 M106.2 6.7 C100.6 6.7 97.8 8.9 97.8 12.2 C97.8 15.5 100.6 17.7 106.2 17.7 M104 4.3 L107 6.7 L104 9.1 M104 15.3 L107 17.7 L104 20.1" fill="none" stroke="#b8bcc5" stroke-width="1.4" stroke-linecap="round" stroke-linejoin="round"/><circle cx="122.3" cy="12" r="8.8" fill="#2cb327"/><path d="M117.3 12 H127.3 M122.3 7 V17" stroke="#fff" stroke-width="1.45"/><circle cx="145.1" cy="12" r="8.8" fill="#e8174f"/><path d="M140 12 H150.2" stroke="#fff" stroke-width="1.6"/></svg>
<svg style="left:1330px;top:441.60px" width="160" height="24" viewBox="0 0 160 24"><path d="M3.2 7.9 L9.5 14.7 L15.8 7.9" fill="none" stroke="#ff9515" stroke-width="2"/><path d="M26.3 4 V18.2" stroke="#ff9515" stroke-width="1.3" fill="none"/><circle cx="26.3" cy="4.4" r="1.5" fill="#ff9515"/><path d="M28.6 4.4 H40" stroke="#ff9515" stroke-width="1.4"/><circle cx="26.3" cy="11.3" r="1.5" fill="#ff9515"/><path d="M28.6 11.3 H40" stroke="#ff9515" stroke-width="1.4"/><circle cx="26.3" cy="17.9" r="1.5" fill="#ff9515"/><path d="M28.6 17.9 H40" stroke="#ff9515" stroke-width="1.4"/><path d="M29 7 H35.4" stroke="#ff9515" stroke-width="1.2"/><path d="M29 13.9 H35.4" stroke="#ff9515" stroke-width="1.2"/><path d="M47.6 12 H62.2 M51.4 8 L47.4 12 L51.4 16 M58.4 8 L62.4 12 L58.4 16" fill="none" stroke="#a0a6b1" stroke-width="1.9" stroke-linejoin="round" stroke-linecap="round"/><g transform="translate(77 12.2) rotate(38)" fill="none" stroke="#b8bcc5" stroke-width="1.4" stroke-linecap="round"><path d="M-3.5 -4 V6 a3.5 3.5 0 0 0 7 0 V-7.8 a2.45 2.45 0 0 0 -4.9 0 V5.2 a1.1 1.1 0 0 0 2.2 0 V-4.6"/></g><path d="M91.8 12.2 H97.8 M106.2 6.7 C100.6 6.7 97.8 8.9 97.8 12.2 C97.8 15.5 100.6 17.7 106.2 17.7 M104 4.3 L107 6.7 L104 9.1 M104 15.3 L107 17.7 L104 20.1" fill="none" stroke="#b8bcc5" stroke-width="1.4" stroke-linecap="round" stroke-linejoin="round"/><circle cx="122.3" cy="12" r="8.8" fill="#2cb327"/><path d="M117.3 12 H127.3 M122.3 7 V17" stroke="#fff" stroke-width="1.45"/><circle cx="145.1" cy="12" r="8.8" fill="#e8174f"/><path d="M140 12 H150.2" stroke="#fff" stroke-width="1.6"/></svg>
<svg style="left:1330px;top:480.00px" width="160" height="24" viewBox="0 0 160 24"><path d="M3.2 7.9 L9.5 14.7 L15.8 7.9" fill="none" stroke="#ff9515" stroke-width="2"/><path d="M26.3 4 V18.2" stroke="#ff9515" stroke-width="1.3" fill="none"/><circle cx="26.3" cy="4.4" r="1.5" fill="#ff9515"/><path d="M28.6 4.4 H40" stroke="#ff9515" stroke-width="1.4"/><circle cx="26.3" cy="11.3" r="1.5" fill="#ff9515"/><path d="M28.6 11.3 H40" stroke="#ff9515" stroke-width="1.4"/><circle cx="26.3" cy="17.9" r="1.5" fill="#ff9515"/><path d="M28.6 17.9 H40" stroke="#ff9515" stroke-width="1.4"/><path d="M29 7 H35.4" stroke="#ff9515" stroke-width="1.2"/><path d="M29 13.9 H35.4" stroke="#ff9515" stroke-width="1.2"/><path d="M47.6 12 H62.2 M51.4 8 L47.4 12 L51.4 16 M58.4 8 L62.4 12 L58.4 16" fill="none" stroke="#a0a6b1" stroke-width="1.9" stroke-linejoin="round" stroke-linecap="round"/><g transform="translate(77 12.2) rotate(38)" fill="none" stroke="#b8bcc5" stroke-width="1.4" stroke-linecap="round"><path d="M-3.5 -4 V6 a3.5 3.5 0 0 0 7 0 V-7.8 a2.45 2.45 0 0 0 -4.9 0 V5.2 a1.1 1.1 0 0 0 2.2 0 V-4.6"/></g><path d="M91.8 12.2 H97.8 M106.2 6.7 C100.6 6.7 97.8 8.9 97.8 12.2 C97.8 15.5 100.6 17.7 106.2 17.7 M104 4.3 L107 6.7 L104 9.1 M104 15.3 L107 17.7 L104 20.1" fill="none" stroke="#b8bcc5" stroke-width="1.4" stroke-linecap="round" stroke-linejoin="round"/><circle cx="122.3" cy="12" r="8.8" fill="#2cb327"/><path d="M117.3 12 H127.3 M122.3 7 V17" stroke="#fff" stroke-width="1.45"/><circle cx="145.1" cy="12" r="8.8" fill="#e8174f"/><path d="M140 12 H150.2" stroke="#fff" stroke-width="1.6"/></svg>
<svg style="left:1330px;top:518.40px" width="160" height="24" viewBox="0 0 160 24"><path d="M3.2 7.9 L9.5 14.7 L15.8 7.9" fill="none" stroke="#ff9515" stroke-width="2"/><path d="M26.3 4 V18.2" stroke="#ff9515" stroke-width="1.3" fill="none"/><circle cx="26.3" cy="4.4" r="1.5" fill="#ff9515"/><path d="M28.6 4.4 H40" stroke="#ff9515" stroke-width="1.4"/><circle cx="26.3" cy="11.3" r="1.5" fill="#ff9515"/><path d="M28.6 11.3 H40" stroke="#ff9515" stroke-width="1.4"/><circle cx="26.3" cy="17.9" r="1.5" fill="#ff9515"/><path d="M28.6 17.9 H40" stroke="#ff9515" stroke-width="1.4"/><path d="M29 7 H35.4" stroke="#ff9515" stroke-width="1.2"/><path d="M29 13.9 H35.4" stroke="#ff9515" stroke-width="1.2"/><path d="M47.6 12 H62.2 M51.4 8 L47.4 12 L51.4 16 M58.4 8 L62.4 12 L58.4 16" fill="none" stroke="#a0a6b1" stroke-width="1.9" stroke-linejoin="round" stroke-linecap="round"/><g transform="translate(77 12.2) rotate(38)" fill="none" stroke="#b8bcc5" stroke-width="1.4" stroke-linecap="round"><path d="M-3.5 -4 V6 a3.5 3.5 0 0 0 7 0 V-7.8 a2.45 2.45 0 0 0 -4.9 0 V5.2 a1.1 1.1 0 0 0 2.2 0 V-4.6"/></g><path d="M91.8 12.2 H97.8 M106.2 6.7 C100.6 6.7 97.8 8.9 97.8 12.2 C97.8 15.5 100.6 17.7 106.2 17.7 M104 4.3 L107 6.7 L104 9.1 M104 15.3 L107 17.7 L104 20.1" fill="none" stroke="#b8bcc5" stroke-width="1.4" stroke-linecap="round" stroke-linejoin="round"/><circle cx="122.3" cy="12" r="8.8" fill="#2cb327"/><path d="M117.3 12 H127.3 M122.3 7 V17" stroke="#fff" stroke-width="1.45"/><circle cx="145.1" cy="12" r="8.8" fill="#e8174f"/><path d="M140 12 H150.2" stroke="#fff" stroke-width="1.6"/></svg>
<svg style="left:1330px;top:556.80px" width="160" height="24" viewBox="0 0 160 24"><path d="M3.2 7.9 L9.5 14.7 L15.8 7.9" fill="none" stroke="#ff9515" stroke-width="2"/><path d="M26.3 4 V18.2" stroke="#ff9515" stroke-width="1.3" fill="none"/><circle cx="26.3" cy="4.4" r="1.5" fill="#ff9515"/><path d="M28.6 4.4 H40" stroke="#ff9515" stroke-width="1.4"/><circle cx="26.3" cy="11.3" r="1.5" fill="#ff9515"/><path d="M28.6 11.3 H40" stroke="#ff9515" stroke-width="1.4"/><circle cx="26.3" cy="17.9" r="1.5" fill="#ff9515"/><path d="M28.6 17.9 H40" stroke="#ff9515" stroke-width="1.4"/><path d="M29 7 H35.4" stroke="#ff9515" stroke-width="1.2"/><path d="M29 13.9 H35.4" stroke="#ff9515" stroke-width="1.2"/><path d="M47.6 12 H62.2 M51.4 8 L47.4 12 L51.4 16 M58.4 8 L62.4 12 L58.4 16" fill="none" stroke="#a0a6b1" stroke-width="1.9" stroke-linejoin="round" stroke-linecap="round"/><g transform="translate(77 12.2) rotate(38)" fill="none" stroke="#b8bcc5" stroke-width="1.4" stroke-linecap="round"><path d="M-3.5 -4 V6 a3.5 3.5 0 0 0 7 0 V-7.8 a2.45 2.45 0 0 0 -4.9 0 V5.2 a1.1 1.1 0 0 0 2.2 0 V-4.6"/></g><path d="M91.8 12.2 H97.8 M106.2 6.7 C100.6 6.7 97.8 8.9 97.8 12.2 C97.8 15.5 100.6 17.7 106.2 17.7 M104 4.3 L107 6.7 L104 9.1 M104 15.3 L107 17.7 L104 20.1" fill="none" stroke="#b8bcc5" stroke-width="1.4" stroke-linecap="round" stroke-linejoin="round"/><circle cx="122.3" cy="12" r="8.8" fill="#2cb327"/><path d="M117.3 12 H127.3 M122.3 7 V17" stroke="#fff" stroke-width="1.45"/><circle cx="145.1" cy="12" r="8.8" fill="#e8174f"/><path d="M140 12 H150.2" stroke="#fff" stroke-width="1.6"/></svg>
<svg style="left:1330px;top:595.20px" width="160" height="24" viewBox="0 0 160 24"><path d="M3.2 7.9 L9.5 14.7 L15.8 7.9" fill="none" stroke="#ff9515" stroke-width="2"/><path d="M26.3 4 V18.2" stroke="#d5d8dd" stroke-width="1.3" fill="none"/><circle cx="26.3" cy="4.4" r="1.5" fill="#d5d8dd"/><path d="M28.6 4.4 H40" stroke="#d5d8dd" stroke-width="1.4"/><circle cx="26.3" cy="11.3" r="1.5" fill="#d5d8dd"/><path d="M28.6 11.3 H40" stroke="#d5d8dd" stroke-width="1.4"/><circle cx="26.3" cy="17.9" r="1.5" fill="#d5d8dd"/><path d="M28.6 17.9 H40" stroke="#d5d8dd" stroke-width="1.4"/><path d="M29 7 H35.4" stroke="#d5d8dd" stroke-width="1.2"/><path d="M29 13.9 H35.4" stroke="#d5d8dd" stroke-width="1.2"/><path d="M47.6 12 H62.2 M51.4 8 L47.4 12 L51.4 16 M58.4 8 L62.4 12 L58.4 16" fill="none" stroke="#a0a6b1" stroke-width="1.9" stroke-linejoin="round" stroke-linecap="round"/><g transform="translate(77 12.2) rotate(38)" fill="none" stroke="#b8bcc5" stroke-width="1.4" stroke-linecap="round"><path d="M-3.5 -4 V6 a3.5 3.5 0 0 0 7 0 V-7.8 a2.45 2.45 0 0 0 -4.9 0 V5.2 a1.1 1.1 0 0 0 2.2 0 V-4.6"/></g><path d="M91.8 12.2 H97.8 M106.2 6.7 C100.6 6.7 97.8 8.9 97.8 12.2 C97.8 15.5 100.6 17.7 106.2 17.7 M104 4.3 L107 6.7 L104 9.1 M104 15.3 L107 17.7 L104 20.1" fill="none" stroke="#b8bcc5" stroke-width="1.4" stroke-linecap="round" stroke-linejoin="round"/><circle cx="122.3" cy="12" r="8.8" fill="#2cb327"/><path d="M117.3 12 H127.3 M122.3 7 V17" stroke="#fff" stroke-width="1.45"/><circle cx="145.1" cy="12" r="8.8" fill="#e8174f"/><path d="M140 12 H150.2" stroke="#fff" stroke-width="1.6"/></svg>
<svg style="left:1330px;top:633.60px" width="160" height="24" viewBox="0 0 160 24"><path d="M3.2 7.9 L9.5 14.7 L15.8 7.9" fill="none" stroke="#ff9515" stroke-width="2"/><path d="M26.3 4 V18.2" stroke="#d5d8dd" stroke-width="1.3" fill="none"/><circle cx="26.3" cy="4.4" r="1.5" fill="#d5d8dd"/><path d="M28.6 4.4 H40" stroke="#d5d8dd" stroke-width="1.4"/><circle cx="26.3" cy="11.3" r="1.5" fill="#d5d8dd"/><path d="M28.6 11.3 H40" stroke="#d5d8dd" stroke-width="1.4"/><circle cx="26.3" cy="17.9" r="1.5" fill="#d5d8dd"/><path d="M28.6 17.9 H40" stroke="#d5d8dd" stroke-width="1.4"/><path d="M29 7 H35.4" stroke="#d5d8dd" stroke-width="1.2"/><path d="M29 13.9 H35.4" stroke="#d5d8dd" stroke-width="1.2"/><path d="M47.6 12 H62.2 M51.4 8 L47.4 12 L51.4 16 M58.4 8 L62.4 12 L58.4 16" fill="none" stroke="#a0a6b1" stroke-width="1.9" stroke-linejoin="round" stroke-linecap="round"/><g transform="translate(77 12.2) rotate(38)" fill="none" stroke="#b8bcc5" stroke-width="1.4" stroke-linecap="round"><path d="M-3.5 -4 V6 a3.5 3.5 0 0 0 7 0 V-7.8 a2.45 2.45 0 0 0 -4.9 0 V5.2 a1.1 1.1 0 0 0 2.2 0 V-4.6"/></g><path d="M91.8 12.2 H97.8 M106.2 6.7 C100.6 6.7 97.8 8.9 97.8 12.2 C97.8 15.5 100.6 17.7 106.2 17.7 M104 4.3 L107 6.7 L104 9.1 M104 15.3 L107 17.7 L104 20.1" fill="none" stroke="#b8bcc5" stroke-width="1.4" stroke-linecap="round" stroke-linejoin="round"/><circle cx="122.3" cy="12" r="8.8" fill="#2cb327"/><path d="M117.3 12 H127.3 M122.3 7 V17" stroke="#fff" stroke-width="1.45"/><circle cx="145.1" cy="12" r="8.8" fill="#e8174f"/><path d="M140 12 H150.2" stroke="#fff" stroke-width="1.6"/></svg>
<svg style="left:1330px;top:672.00px" width="160" height="24" viewBox="0 0 160 24"><path d="M3.2 7.9 L9.5 14.7 L15.8 7.9" fill="none" stroke="#ff9515" stroke-width="2"/><path d="M26.3 4 V18.2" stroke="#d5d8dd" stroke-width="1.3" fill="none"/><circle cx="26.3" cy="4.4" r="1.5" fill="#d5d8dd"/><path d="M28.6 4.4 H40" stroke="#d5d8dd" stroke-width="1.4"/><circle cx="26.3" cy="11.3" r="1.5" fill="#d5d8dd"/><path d="M28.6 11.3 H40" stroke="#d5d8dd" stroke-width="1.4"/><circle cx="26.3" cy="17.9" r="1.5" fill="#d5d8dd"/><path d="M28.6 17.9 H40" stroke="#d5d8dd" stroke-width="1.4"/><path d="M29 7 H35.4" stroke="#d5d8dd" stroke-width="1.2"/><path d="M29 13.9 H35.4" stroke="#d5d8dd" stroke-width="1.2"/><path d="M47.6 12 H62.2 M51.4 8 L47.4 12 L51.4 16 M58.4 8 L62.4 12 L58.4 16" fill="none" stroke="#a0a6b1" stroke-width="1.9" stroke-linejoin="round" stroke-linecap="round"/><g transform="translate(77 12.2) rotate(38)" fill="none" stroke="#b8bcc5" stroke-width="1.4" stroke-linecap="round"><path d="M-3.5 -4 V6 a3.5 3.5 0 0 0 7 0 V-7.8 a2.45 2.45 0 0 0 -4.9 0 V5.2 a1.1 1.1 0 0 0 2.2 0 V-4.6"/></g><path d="M91.8 12.2 H97.8 M106.2 6.7 C100.6 6.7 97.8 8.9 97.8 12.2 C97.8 15.5 100.6 17.7 106.2 17.7 M104 4.3 L107 6.7 L104 9.1 M104 15.3 L107 17.7 L104 20.1" fill="none" stroke="#b8bcc5" stroke-width="1.4" stroke-linecap="round" stroke-linejoin="round"/><circle cx="122.3" cy="12" r="8.8" fill="#2cb327"/><path d="M117.3 12 H127.3 M122.3 7 V17" stroke="#fff" stroke-width="1.45"/><circle cx="145.1" cy="12" r="8.8" fill="#e8174f"/><path d="M140 12 H150.2" stroke="#fff" stroke-width="1.6"/></svg>
<svg style="left:1330px;top:710.40px" width="160" height="24" viewBox="0 0 160 24"><path d="M3.2 7.9 L9.5 14.7 L15.8 7.9" fill="none" stroke="#ff9515" stroke-width="2"/><path d="M26.3 4 V18.2" stroke="#d5d8dd" stroke-width="1.3" fill="none"/><circle cx="26.3" cy="4.4" r="1.5" fill="#d5d8dd"/><path d="M28.6 4.4 H40" stroke="#d5d8dd" stroke-width="1.4"/><circle cx="26.3" cy="11.3" r="1.5" fill="#d5d8dd"/><path d="M28.6 11.3 H40" stroke="#d5d8dd" stroke-width="1.4"/><circle cx="26.3" cy="17.9" r="1.5" fill="#d5d8dd"/><path d="M28.6 17.9 H40" stroke="#d5d8dd" stroke-width="1.4"/><path d="M29 7 H35.4" stroke="#d5d8dd" stroke-width="1.2"/><path d="M29 13.9 H35.4" stroke="#d5d8dd" stroke-width="1.2"/><path d="M47.6 12 H62.2 M51.4 8 L47.4 12 L51.4 16 M58.4 8 L62.4 12 L58.4 16" fill="none" stroke="#a0a6b1" stroke-width="1.9" stroke-linejoin="round" stroke-linecap="round"/><g transform="translate(77 12.2) rotate(38)" fill="none" stroke="#b8bcc5" stroke-width="1.4" stroke-linecap="round"><path d="M-3.5 -4 V6 a3.5 3.5 0 0 0 7 0 V-7.8 a2.45 2.45 0 0 0 -4.9 0 V5.2 a1.1 1.1 0 0 0 2.2 0 V-4.6"/></g><path d="M91.8 12.2 H97.8 M106.2 6.7 C100.6 6.7 97.8 8.9 97.8 12.2 C97.8 15.5 100.6 17.7 106.2 17.7 M104 4.3 L107 6.7 L104 9.1 M104 15.3 L107 17.7 L104 20.1" fill="none" stroke="#b8bcc5" stroke-width="1.4" stroke-linecap="round" stroke-linejoin="round"/><circle cx="122.3" cy="12" r="8.8" fill="#2cb327"/><path d="M117.3 12 H127.3 M122.3 7 V17" stroke="#fff" stroke-width="1.45"/><circle cx="145.1" cy="12" r="8.8" fill="#e8174f"/><path d="M140 12 H150.2" stroke="#fff" stroke-width="1.6"/></svg>
<svg style="left:1330px;top:748.80px" width="160" height="24" viewBox="0 0 160 24"><path d="M3.2 7.9 L9.5 14.7 L15.8 7.9" fill="none" stroke="#ff9515" stroke-width="2"/><path d="M26.3 4 V18.2" stroke="#d5d8dd" stroke-width="1.3" fill="none"/><circle cx="26.3" cy="4.4" r="1.5" fill="#d5d8dd"/><path d="M28.6 4.4 H40" stroke="#d5d8dd" stroke-width="1.4"/><circle cx="26.3" cy="11.3" r="1.5" fill="#d5d8dd"/><path d="M28.6 11.3 H40" stroke="#d5d8dd" stroke-width="1.4"/><circle cx="26.3" cy="17.9" r="1.5" fill="#d5d8dd"/><path d="M28.6 17.9 H40" stroke="#d5d8dd" stroke-width="1.4"/><path d="M29 7 H35.4" stroke="#d5d8dd" stroke-width="1.2"/><path d="M29 13.9 H35.4" stroke="#d5d8dd" stroke-width="1.2"/><path d="M47.6 12 H62.2 M51.4 8 L47.4 12 L51.4 16 M58.4 8 L62.4 12 L58.4 16" fill="none" stroke="#a0a6b1" stroke-width="1.9" stroke-linejoin="round" stroke-linecap="round"/><g transform="translate(77 12.2) rotate(38)" fill="none" stroke="#b8bcc5" stroke-width="1.4" stroke-linecap="round"><path d="M-3.5 -4 V6 a3.5 3.5 0 0 0 7 0 V-7.8 a2.45 2.45 0 0 0 -4.9 0 V5.2 a1.1 1.1 0 0 0 2.2 0 V-4.6"/></g><path d="M91.8 12.2 H97.8 M106.2 6.7 C100.6 6.7 97.8 8.9 97.8 12.2 C97.8 15.5 100.6 17.7 106.2 17.7 M104 4.3 L107 6.7 L104 9.1 M104 15.3 L107 17.7 L104 20.1" fill="none" stroke="#b8bcc5" stroke-width="1.4" stroke-linecap="round" stroke-linejoin="round"/><circle cx="122.3" cy="12" r="8.8" fill="#2cb327"/><path d="M117.3 12 H127.3 M122.3 7 V17" stroke="#fff" stroke-width="1.45"/><circle cx="145.1" cy="12" r="8.8" fill="#e8174f"/><path d="M140 12 H150.2" stroke="#fff" stroke-width="1.6"/></svg>
<svg style="left:1330px;top:787.20px" width="160" height="24" viewBox="0 0 160 24"><path d="M3.2 7.9 L9.5 14.7 L15.8 7.9" fill="none" stroke="#ff9515" stroke-width="2"/><path d="M26.3 4 V18.2" stroke="#d5d8dd" stroke-width="1.3" fill="none"/><circle cx="26.3" cy="4.4" r="1.5" fill="#d5d8dd"/><path d="M28.6 4.4 H40" stroke="#d5d8dd" stroke-width="1.4"/><circle cx="26.3" cy="11.3" r="1.5" fill="#d5d8dd"/><path d="M28.6 11.3 H40" stroke="#d5d8dd" stroke-width="1.4"/><circle cx="26.3" cy="17.9" r="1.5" fill="#d5d8dd"/><path d="M28.6 17.9 H40" stroke="#d5d8dd" stroke-width="1.4"/><path d="M29 7 H35.4" stroke="#d5d8dd" stroke-width="1.2"/><path d="M29 13.9 H35.4" stroke="#d5d8dd" stroke-width="1.2"/><path d="M47.6 12 H62.2 M51.4 8 L47.4 12 L51.4 16 M58.4 8 L62.4 12 L58.4 16" fill="none" stroke="#a0a6b1" stroke-width="1.9" stroke-linejoin="round" stroke-linecap="round"/><g transform="translate(77 12.2) rotate(38)" fill="none" stroke="#b8bcc5" stroke-width="1.4" stroke-linecap="round"><path d="M-3.5 -4 V6 a3.5 3.5 0 0 0 7 0 V-7.8 a2.45 2.45 0 0 0 -4.9 0 V5.2 a1.1 1.1 0 0 0 2.2 0 V-4.6"/></g><path d="M91.8 12.2 H97.8 M106.2 6.7 C100.6 6.7 97.8 8.9 97.8 12.2 C97.8 15.5 100.6 17.7 106.2 17.7 M104 4.3 L107 6.7 L104 9.1 M104 15.3 L107 17.7 L104 20.1" fill="none" stroke="#b8bcc5" stroke-width="1.4" stroke-linecap="round" stroke-linejoin="round"/><circle cx="122.3" cy="12" r="8.8" fill="#2cb327"/><path d="M117.3 12 H127.3 M122.3 7 V17" stroke="#fff" stroke-width="1.45"/><circle cx="145.1" cy="12" r="8.8" fill="#e8174f"/><path d="M140 12 H150.2" stroke="#fff" stroke-width="1.6"/></svg>
<svg style="left:1330px;top:825.60px" width="160" height="24" viewBox="0 0 160 24"><path d="M3.2 7.9 L9.5 14.7 L15.8 7.9" fill="none" stroke="#ff9515" stroke-width="2"/><path d="M26.3 4 V18.2" stroke="#d5d8dd" stroke-width="1.3" fill="none"/><circle cx="26.3" cy="4.4" r="1.5" fill="#d5d8dd"/><path d="M28.6 4.4 H40" stroke="#d5d8dd" stroke-width="1.4"/><circle cx="26.3" cy="11.3" r="1.5" fill="#d5d8dd"/><path d="M28.6 11.3 H40" stroke="#d5d8dd" stroke-width="1.4"/><circle cx="26.3" cy="17.9" r="1.5" fill="#d5d8dd"/><path d="M28.6 17.9 H40" stroke="#d5d8dd" stroke-width="1.4"/><path d="M29 7 H35.4" stroke="#d5d8dd" stroke-width="1.2"/><path d="M29 13.9 H35.4" stroke="#d5d8dd" stroke-width="1.2"/><path d="M47.6 12 H62.2 M51.4 8 L47.4 12 L51.4 16 M58.4 8 L62.4 12 L58.4 16" fill="none" stroke="#a0a6b1" stroke-width="1.9" stroke-linejoin="round" stroke-linecap="round"/><g transform="translate(77 12.2) rotate(38)" fill="none" stroke="#b8bcc5" stroke-width="1.4" stroke-linecap="round"><path d="M-3.5 -4 V6 a3.5 3.5 0 0 0 7 0 V-7.8 a2.45 2.45 0 0 0 -4.9 0 V5.2 a1.1 1.1 0 0 0 2.2 0 V-4.6"/></g><path d="M91.8 12.2 H97.8 M106.2 6.7 C100.6 6.7 97.8 8.9 97.8 12.2 C97.8 15.5 100.6 17.7 106.2 17.7 M104 4.3 L107 6.7 L104 9.1 M104 15.3 L107 17.7 L104 20.1" fill="none" stroke="#b8bcc5" stroke-width="1.4" stroke-linecap="round" stroke-linejoin="round"/><circle cx="122.3" cy="12" r="8.8" fill="#2cb327"/><path d="M117.3 12 H127.3 M122.3 7 V17" stroke="#fff" stroke-width="1.45"/><circle cx="145.1" cy="12" r="8.8" fill="#e8174f"/><path d="M140 12 H150.2" stroke="#fff" stroke-width="1.6"/></svg>
<svg style="left:1330px;top:864.00px" width="160" height="24" viewBox="0 0 160 24"><path d="M3.2 7.9 L9.5 14.7 L15.8 7.9" fill="none" stroke="#ff9515" stroke-width="2"/><path d="M26.3 4 V18.2" stroke="#d5d8dd" stroke-width="1.3" fill="none"/><circle cx="26.3" cy="4.4" r="1.5" fill="#d5d8dd"/><path d="M28.6 4.4 H40" stroke="#d5d8dd" stroke-width="1.4"/><circle cx="26.3" cy="11.3" r="1.5" fill="#d5d8dd"/><path d="M28.6 11.3 H40" stroke="#d5d8dd" stroke-width="1.4"/><circle cx="26.3" cy="17.9" r="1.5" fill="#d5d8dd"/><path d="M28.6 17.9 H40" stroke="#d5d8dd" stroke-width="1.4"/><path d="M29 7 H35.4" stroke="#d5d8dd" stroke-width="1.2"/><path d="M29 13.9 H35.4" stroke="#d5d8dd" stroke-width="1.2"/><path d="M47.6 12 H62.2 M51.4 8 L47.4 12 L51.4 16 M58.4 8 L62.4 12 L58.4 16" fill="none" stroke="#a0a6b1" stroke-width="1.9" stroke-linejoin="round" stroke-linecap="round"/><g transform="translate(77 12.2) rotate(38)" fill="none" stroke="#b8bcc5" stroke-width="1.4" stroke-linecap="round"><path d="M-3.5 -4 V6 a3.5 3.5 0 0 0 7 0 V-7.8 a2.45 2.45 0 0 0 -4.9 0 V5.2 a1.1 1.1 0 0 0 2.2 0 V-4.6"/></g><path d="M91.8 12.2 H97.8 M106.2 6.7 C100.6 6.7 97.8 8.9 97.8 12.2 C97.8 15.5 100.6 17.7 106.2 17.7 M104 4.3 L107 6.7 L104 9.1 M104 15.3 L107 17.7 L104 20.1" fill="none" stroke="#b8bcc5" stroke-width="1.4" stroke-linecap="round" stroke-linejoin="round"/><circle cx="122.3" cy="12" r="8.8" fill="#2cb327"/><path d="M117.3 12 H127.3 M122.3 7 V17" stroke="#fff" stroke-width="1.45"/><circle cx="145.1" cy="12" r="8.8" fill="#e8174f"/><path d="M140 12 H150.2" stroke="#fff" stroke-width="1.6"/></svg>
<svg style="left:1330px;top:902.40px" width="160" height="24" viewBox="0 0 160 24"><path d="M3.2 7.9 L9.5 14.7 L15.8 7.9" fill="none" stroke="#ff9515" stroke-width="2"/><path d="M26.3 4 V18.2" stroke="#d5d8dd" stroke-width="1.3" fill="none"/><circle cx="26.3" cy="4.4" r="1.5" fill="#d5d8dd"/><path d="M28.6 4.4 H40" stroke="#d5d8dd" stroke-width="1.4"/><circle cx="26.3" cy="11.3" r="1.5" fill="#d5d8dd"/><path d="M28.6 11.3 H40" stroke="#d5d8dd" stroke-width="1.4"/><circle cx="26.3" cy="17.9" r="1.5" fill="#d5d8dd"/><path d="M28.6 17.9 H40" stroke="#d5d8dd" stroke-width="1.4"/><path d="M29 7 H35.4" stroke="#d5d8dd" stroke-width="1.2"/><path d="M29 13.9 H35.4" stroke="#d5d8dd" stroke-width="1.2"/><path d="M47.6 12 H62.2 M51.4 8 L47.4 12 L51.4 16 M58.4 8 L62.4 12 L58.4 16" fill="none" stroke="#a0a6b1" stroke-width="1.9" stroke-linejoin="round" stroke-linecap="round"/><g transform="translate(77 12.2) rotate(38)" fill="none" stroke="#b8bcc5" stroke-width="1.4" stroke-linecap="round"><path d="M-3.5 -4 V6 a3.5 3.5 0 0 0 7 0 V-7.8 a2.45 2.45 0 0 0 -4.9 0 V5.2 a1.1 1.1 0 0 0 2.2 0 V-4.6"/></g><path d="M91.8 12.2 H97.8 M106.2 6.7 C100.6 6.7 97.8 8.9 97.8 12.2 C97.8 15.5 100.6 17.7 106.2 17.7 M104 4.3 L107 6.7 L104 9.1 M104 15.3 L107 17.7 L104 20.1" fill="none" stroke="#b8bcc5" stroke-width="1.4" stroke-linecap="round" stroke-linejoin="round"/><circle cx="122.3" cy="12" r="8.8" fill="#2cb327"/><path d="M117.3 12 H127.3 M122.3 7 V17" stroke="#fff" stroke-width="1.45"/><circle cx="145.1" cy="12" r="8.8" fill="#e8174f"/><path d="M140 12 H150.2" stroke="#fff" stroke-width="1.6"/></svg>
<span class="t" style="left:37.00px;top:49.25px;font-size:22.5px;font-weight:400;color:#00d639;transform-origin:0 0;transform:scaleX(0.8086);-webkit-text-stroke:0.3px #00d639;">Sage</span>
<span class="t" style="left:108.00px;top:53.05px;font-size:14px;font-weight:700;color:#fff;letter-spacing:0.200px;">Accounting</span>
<span class="t" style="left:196.00px;top:53.60px;font-size:13px;font-weight:400;color:#fff;letter-spacing:-0.017px;-webkit-text-stroke:0.22px #fff;">- Accountant Edition</span>
<span class="t" style="left:332.50px;top:53.70px;font-size:13px;font-weight:400;color:#f2f3f5;letter-spacing:-0.285px;-webkit-text-stroke:0.22px #f2f3f5;">Search transactions</span>
<span class="t" style="left:1175.25px;top:55.10px;font-size:13px;font-weight:400;color:#fff;letter-spacing:-0.276px;-webkit-text-stroke:0.22px #fff;">The Fun Accountant - DEMO</span>
<span class="t" style="left:1123.70px;width:600px;text-align:center;top:57.37px;font-size:11.5px;font-weight:700;color:#fff;">?</span>
<span class="t" style="left:1460.30px;top:55.20px;font-size:14.3px;font-weight:400;color:#e4e5e9;letter-spacing:-0.938px;-webkit-text-stroke:0.22px #e4e5e9;">LM</span>
<span class="t" style="left:37.70px;top:98.70px;font-size:13px;font-weight:700;color:#23262e;letter-spacing:-0.706px;">Home</span>
<span class="t" style="left:97.60px;top:98.70px;font-size:13px;font-weight:700;color:#23262e;letter-spacing:-0.324px;">Quick View</span>
<span class="t" style="left:190.00px;top:98.70px;font-size:13px;font-weight:700;color:#23262e;letter-spacing:-0.686px;">Customers</span>
<span class="t" style="left:278.00px;top:98.70px;font-size:13px;font-weight:700;color:#23262e;letter-spacing:-0.694px;">Suppliers</span>
<span class="t" style="left:357.50px;top:98.70px;font-size:13px;font-weight:700;color:#23262e;letter-spacing:-0.544px;">Items</span>
<span class="t" style="left:415.50px;top:98.70px;font-size:13px;font-weight:700;color:#23262e;letter-spacing:-0.721px;">Banking</span>
<span class="t" style="left:488.00px;top:98.70px;font-size:13px;font-weight:700;color:#23262e;letter-spacing:-0.748px;">Accounts</span>
<span class="t" style="left:567.50px;top:98.70px;font-size:13px;font-weight:700;color:#23262e;letter-spacing:-0.492px;">Accountant&#x27;s Area</span>
<span class="t" style="left:700.00px;top:98.70px;font-size:13px;font-weight:700;color:#23262e;letter-spacing:-0.661px;">Reports</span>
<span class="t" style="left:771.25px;top:98.70px;font-size:13px;font-weight:700;color:#23262e;letter-spacing:-0.783px;">Company</span>
<span class="t" style="left:851.50px;top:98.70px;font-size:13px;font-weight:700;color:#23262e;letter-spacing:-0.410px;">Administration</span>
<span class="t" style="left:81.75px;top:159.77px;font-size:13.5px;font-weight:700;color:#2146bd;letter-spacing:-0.895px;">Actions</span>
<span class="t" style="left:148.00px;top:161.12px;font-size:12.5px;font-weight:700;color:#fff;letter-spacing:-0.778px;">Mark as Reviewed</span>
<span class="t" style="left:272.50px;top:161.12px;font-size:12.5px;font-weight:700;color:#2146bd;letter-spacing:-0.422px;">Delete</span>
<span class="t" style="left:336.50px;top:161.12px;font-size:12.5px;font-weight:700;color:#2146bd;letter-spacing:-0.784px;">Keep Duplicates</span>
<span class="t" style="left:450.75px;top:161.12px;font-size:12.5px;font-weight:700;color:#2146bd;letter-spacing:-0.831px;">Batch Edit</span>
<span class="t" style="left:552.50px;top:161.12px;font-size:12.5px;font-weight:700;color:#2146bd;letter-spacing:-0.763px;">Import Bank Statements</span>
<span class="t" style="left:710.00px;top:161.12px;font-size:12.5px;font-weight:700;color:#2146bd;letter-spacing:-0.766px;">Export</span>
<span class="t" style="left:1215.75px;top:160.20px;font-size:13px;font-weight:700;color:#2146bd;letter-spacing:-0.645px;">Shortcut Keys</span>
<span class="t" style="left:1313.00px;top:158.37px;font-size:13.5px;font-weight:400;color:#8c9099;letter-spacing:-0.630px;-webkit-text-stroke:0.22px #8c9099;font-style:italic;">Search</span>
<span class="t" style="left:87.00px;top:200.60px;font-size:15px;font-weight:700;color:#fff;letter-spacing:-0.004px;">Date</span>
<span class="t" style="left:185.00px;top:200.60px;font-size:15px;font-weight:700;color:#fff;letter-spacing:-0.475px;">Payee</span>
<span class="t" style="left:283.50px;top:200.60px;font-size:15px;font-weight:700;color:#fff;letter-spacing:-0.411px;">Description</span>
<span class="t" style="left:463.00px;top:200.60px;font-size:15px;font-weight:700;color:#fff;letter-spacing:-0.602px;">Type</span>
<span class="t" style="left:559.50px;top:200.60px;font-size:15px;font-weight:700;color:#fff;letter-spacing:-0.465px;">Selection</span>
<span class="t" style="left:698.75px;top:200.60px;font-size:15px;font-weight:700;color:#fff;letter-spacing:-0.422px;">Reference</span>
<span class="t" style="left:851.50px;top:200.60px;font-size:15px;font-weight:700;color:#fff;letter-spacing:-0.260px;">VAT</span>
<span class="t" style="left:972.00px;top:200.60px;font-size:15px;font-weight:700;color:#fff;letter-spacing:-0.634px;">Spent</span>
<span class="t" style="left:1063.75px;top:200.60px;font-size:15px;font-weight:700;color:#fff;letter-spacing:-0.641px;">Received</span>
<span class="t" style="left:1159.50px;top:200.60px;font-size:15px;font-weight:700;color:#fff;letter-spacing:-0.797px;">Rec.</span>
<span class="t" style="left:1223.00px;top:200.60px;font-size:15px;font-weight:700;color:#fff;letter-spacing:-0.186px;">Department</span>
<span class="t" style="left:1389.00px;top:200.60px;font-size:15px;font-weight:700;color:#fff;letter-spacing:-0.645px;">Actions</span>
<span class="t" style="left:42.00px;top:237.97px;font-size:12.2px;font-weight:400;color:#23262e;letter-spacing:-0.411px;-webkit-text-stroke:0.22px #23262e;">You have <b>45</b> new Bank Statement transactions to review and process.</span>
<span class="t" style="left:42.00px;top:259.87px;font-size:12.2px;font-weight:400;color:#23262e;letter-spacing:-0.329px;-webkit-text-stroke:0.22px #23262e;">Your last import included transactions up to 2 September 2022. See where you left off -</span>
<span class="t" style="left:485.00px;top:259.87px;font-size:12.2px;font-weight:700;color:#2a4fc2;letter-spacing:-0.548px;">view the last 10 transactions imported</span>
<span class="t" style="left:685.30px;top:259.87px;font-size:12.2px;font-weight:400;color:#23262e;-webkit-text-stroke:0.22px #23262e;">.</span>
<span class="t" style="left:90.90px;top:296.87px;font-size:12.2px;font-weight:400;color:#23262e;letter-spacing:0.200px;-webkit-text-stroke:0.22px #23262e;">01/07/2022</span>
<span class="t" style="left:288.00px;top:296.87px;font-size:12.2px;font-weight:400;color:#23262e;letter-spacing:-0.173px;-webkit-text-stroke:0.22px #23262e;">Inner-Pool</span>
<span class="t" style="left:467.00px;top:296.87px;font-size:12.2px;font-weight:400;color:#23262e;letter-spacing:-0.291px;-webkit-text-stroke:0.22px #23262e;">Customer</span>
<span class="t" style="left:564.00px;top:296.87px;font-size:12.2px;font-weight:400;color:#23262e;letter-spacing:-0.173px;-webkit-text-stroke:0.22px #23262e;">Inner-Pool</span>
<span class="t" style="left:703.00px;top:296.87px;font-size:12.2px;font-weight:400;color:#23262e;letter-spacing:0.007px;-webkit-text-stroke:0.22px #23262e;">20220701-0007</span>
<span class="t" style="left:855.75px;top:296.87px;font-size:12.2px;font-weight:400;color:#23262e;letter-spacing:-0.393px;-webkit-text-stroke:0.22px #23262e;">No VAT</span>
<span class="t" style="right:398.00px;margin-right:0.414px;top:296.87px;font-size:12.2px;font-weight:400;color:#23262e;letter-spacing:-0.414px;-webkit-text-stroke:0.22px #23262e;">R 1,225.00</span>
<span class="t" style="left:90.90px;top:335.27px;font-size:12.2px;font-weight:400;color:#2a4fc2;letter-spacing:0.200px;-webkit-text-stroke:0.22px #2a4fc2;">01/08/2022</span>
<span class="t" style="left:288.00px;top:335.27px;font-size:12.2px;font-weight:400;color:#2a4fc2;letter-spacing:-0.173px;-webkit-text-stroke:0.22px #2a4fc2;">Inner-Pool</span>
<span class="t" style="left:467.00px;top:335.27px;font-size:12.2px;font-weight:400;color:#2a4fc2;letter-spacing:-0.291px;-webkit-text-stroke:0.22px #2a4fc2;">Customer</span>
<span class="t" style="left:564.00px;top:335.27px;font-size:12.2px;font-weight:400;color:#2a4fc2;letter-spacing:-0.173px;-webkit-text-stroke:0.22px #2a4fc2;">Inner-Pool</span>
<span class="t" style="left:703.00px;top:335.27px;font-size:12.2px;font-weight:400;color:#2a4fc2;letter-spacing:0.007px;-webkit-text-stroke:0.22px #2a4fc2;">20220801-0021</span>
<span class="t" style="left:855.75px;top:335.27px;font-size:12.2px;font-weight:400;color:#23262e;letter-spacing:-0.393px;-webkit-text-stroke:0.22px #23262e;">No VAT</span>
<span class="t" style="right:398.00px;margin-right:0.434px;top:335.27px;font-size:12.2px;font-weight:400;color:#2a4fc2;letter-spacing:-0.434px;-webkit-text-stroke:0.22px #2a4fc2;">R 500.00</span>
<span class="t" style="left:90.90px;top:373.67px;font-size:12.2px;font-weight:400;color:#2a4fc2;letter-spacing:0.200px;-webkit-text-stroke:0.22px #2a4fc2;">28/08/2022</span>
<span class="t" style="left:288.00px;top:373.67px;font-size:12.2px;font-weight:400;color:#2a4fc2;letter-spacing:-0.173px;-webkit-text-stroke:0.22px #2a4fc2;">Inner-Pool</span>
<span class="t" style="left:467.00px;top:373.67px;font-size:12.2px;font-weight:400;color:#2a4fc2;letter-spacing:-0.291px;-webkit-text-stroke:0.22px #2a4fc2;">Customer</span>
<span class="t" style="left:564.00px;top:373.67px;font-size:12.2px;font-weight:400;color:#2a4fc2;letter-spacing:-0.173px;-webkit-text-stroke:0.22px #2a4fc2;">Inner-Pool</span>
<span class="t" style="left:703.00px;top:373.67px;font-size:12.2px;font-weight:400;color:#2a4fc2;letter-spacing:0.007px;-webkit-text-stroke:0.22px #2a4fc2;">20220828-0003</span>
<span class="t" style="left:855.75px;top:373.67px;font-size:12.2px;font-weight:400;color:#23262e;letter-spacing:-0.393px;-webkit-text-stroke:0.22px #23262e;">No VAT</span>
<span class="t" style="right:398.00px;margin-right:0.434px;top:373.67px;font-size:12.2px;font-weight:400;color:#2a4fc2;letter-spacing:-0.434px;-webkit-text-stroke:0.22px #2a4fc2;">R 350.00</span>
<span class="t" style="left:90.90px;top:412.07px;font-size:12.2px;font-weight:400;color:#2a4fc2;letter-spacing:0.200px;-webkit-text-stroke:0.22px #2a4fc2;">01/09/2022</span>
<span class="t" style="left:288.00px;top:412.07px;font-size:12.2px;font-weight:400;color:#2a4fc2;letter-spacing:-0.173px;-webkit-text-stroke:0.22px #2a4fc2;">Inner-Pool</span>
<span class="t" style="left:467.00px;top:412.07px;font-size:12.2px;font-weight:400;color:#2a4fc2;letter-spacing:-0.291px;-webkit-text-stroke:0.22px #2a4fc2;">Customer</span>
<span class="t" style="left:564.00px;top:412.07px;font-size:12.2px;font-weight:400;color:#2a4fc2;letter-spacing:-0.173px;-webkit-text-stroke:0.22px #2a4fc2;">Inner-Pool</span>
<span class="t" style="left:703.00px;top:412.07px;font-size:12.2px;font-weight:400;color:#2a4fc2;letter-spacing:0.007px;-webkit-text-stroke:0.22px #2a4fc2;">20220901-0029</span>
<span class="t" style="left:855.75px;top:412.07px;font-size:12.2px;font-weight:400;color:#23262e;letter-spacing:-0.393px;-webkit-text-stroke:0.22px #23262e;">No VAT</span>
<span class="t" style="right:398.00px;margin-right:0.434px;top:412.07px;font-size:12.2px;font-weight:400;color:#2a4fc2;letter-spacing:-0.434px;-webkit-text-stroke:0.22px #2a4fc2;">R 275.00</span>
<span class="t" style="left:90.90px;top:450.47px;font-size:12.2px;font-weight:400;color:#2a4fc2;letter-spacing:0.200px;-webkit-text-stroke:0.22px #2a4fc2;">01/07/2022</span>
<span class="t" style="left:288.00px;top:450.47px;font-size:12.2px;font-weight:400;color:#2a4fc2;letter-spacing:-0.745px;-webkit-text-stroke:0.22px #2a4fc2;">Jaws</span>
<span class="t" style="left:467.00px;top:450.47px;font-size:12.2px;font-weight:400;color:#2a4fc2;letter-spacing:-0.291px;-webkit-text-stroke:0.22px #2a4fc2;">Customer</span>
<span class="t" style="left:564.00px;top:450.47px;font-size:12.2px;font-weight:400;color:#2a4fc2;letter-spacing:-0.745px;-webkit-text-stroke:0.22px #2a4fc2;">Jaws</span>
<span class="t" style="left:703.00px;top:450.47px;font-size:12.2px;font-weight:400;color:#2a4fc2;letter-spacing:0.007px;-webkit-text-stroke:0.22px #2a4fc2;">20220701-0008</span>
<span class="t" style="left:855.75px;top:450.47px;font-size:12.2px;font-weight:400;color:#23262e;letter-spacing:-0.393px;-webkit-text-stroke:0.22px #23262e;">No VAT</span>
<span class="t" style="right:398.00px;margin-right:0.434px;top:450.47px;font-size:12.2px;font-weight:400;color:#2a4fc2;letter-spacing:-0.434px;-webkit-text-stroke:0.22px #2a4fc2;">R 350.00</span>
<span class="t" style="left:90.90px;top:488.87px;font-size:12.2px;font-weight:400;color:#2a4fc2;letter-spacing:0.200px;-webkit-text-stroke:0.22px #2a4fc2;">01/08/2022</span>
<span class="t" style="left:288.00px;top:488.87px;font-size:12.2px;font-weight:400;color:#2a4fc2;letter-spacing:-0.745px;-webkit-text-stroke:0.22px #2a4fc2;">Jaws</span>
<span class="t" style="left:467.00px;top:488.87px;font-size:12.2px;font-weight:400;color:#2a4fc2;letter-spacing:-0.291px;-webkit-text-stroke:0.22px #2a4fc2;">Customer</span>
<span class="t" style="left:564.00px;top:488.87px;font-size:12.2px;font-weight:400;color:#2a4fc2;letter-spacing:-0.745px;-webkit-text-stroke:0.22px #2a4fc2;">Jaws</span>
<span class="t" style="left:703.00px;top:488.87px;font-size:12.2px;font-weight:400;color:#2a4fc2;letter-spacing:0.007px;-webkit-text-stroke:0.22px #2a4fc2;">20220801-0022</span>
<span class="t" style="left:855.75px;top:488.87px;font-size:12.2px;font-weight:400;color:#23262e;letter-spacing:-0.393px;-webkit-text-stroke:0.22px #23262e;">No VAT</span>
<span class="t" style="right:398.00px;margin-right:0.434px;top:488.87px;font-size:12.2px;font-weight:400;color:#2a4fc2;letter-spacing:-0.434px;-webkit-text-stroke:0.22px #2a4fc2;">R 180.00</span>
<span class="t" style="left:90.90px;top:527.27px;font-size:12.2px;font-weight:400;color:#2a4fc2;letter-spacing:0.200px;-webkit-text-stroke:0.22px #2a4fc2;">01/09/2022</span>
<span class="t" style="left:288.00px;top:527.27px;font-size:12.2px;font-weight:400;color:#2a4fc2;letter-spacing:-0.745px;-webkit-text-stroke:0.22px #2a4fc2;">Jaws</span>
<span class="t" style="left:467.00px;top:527.27px;font-size:12.2px;font-weight:400;color:#2a4fc2;letter-spacing:-0.291px;-webkit-text-stroke:0.22px #2a4fc2;">Customer</span>
<span class="t" style="left:564.00px;top:527.27px;font-size:12.2px;font-weight:400;color:#2a4fc2;letter-spacing:-0.745px;-webkit-text-stroke:0.22px #2a4fc2;">Jaws</span>
<span class="t" style="left:703.00px;top:527.27px;font-size:12.2px;font-weight:400;color:#2a4fc2;letter-spacing:0.007px;-webkit-text-stroke:0.22px #2a4fc2;">20220901-0004</span>
<span class="t" style="left:855.75px;top:527.27px;font-size:12.2px;font-weight:400;color:#23262e;letter-spacing:-0.393px;-webkit-text-stroke:0.22px #23262e;">No VAT</span>
<span class="t" style="right:398.00px;margin-right:0.434px;top:527.27px;font-size:12.2px;font-weight:400;color:#2a4fc2;letter-spacing:-0.434px;-webkit-text-stroke:0.22px #2a4fc2;">R 350.00</span>
<span class="t" style="left:90.90px;top:565.67px;font-size:12.2px;font-weight:400;color:#2a4fc2;letter-spacing:0.200px;-webkit-text-stroke:0.22px #2a4fc2;">01/09/2022</span>
<span class="t" style="left:288.00px;top:565.67px;font-size:12.2px;font-weight:400;color:#2a4fc2;letter-spacing:-0.745px;-webkit-text-stroke:0.22px #2a4fc2;">Jaws</span>
<span class="t" style="left:467.00px;top:565.67px;font-size:12.2px;font-weight:400;color:#2a4fc2;letter-spacing:-0.291px;-webkit-text-stroke:0.22px #2a4fc2;">Customer</span>
<span class="t" style="left:564.00px;top:565.67px;font-size:12.2px;font-weight:400;color:#2a4fc2;letter-spacing:-0.745px;-webkit-text-stroke:0.22px #2a4fc2;">Jaws</span>
<span class="t" style="left:703.00px;top:565.67px;font-size:12.2px;font-weight:400;color:#2a4fc2;letter-spacing:0.007px;-webkit-text-stroke:0.22px #2a4fc2;">20220901-0030</span>
<span class="t" style="left:855.75px;top:565.67px;font-size:12.2px;font-weight:400;color:#23262e;letter-spacing:-0.393px;-webkit-text-stroke:0.22px #23262e;">No VAT</span>
<span class="t" style="right:398.00px;margin-right:0.434px;top:565.67px;font-size:12.2px;font-weight:400;color:#2a4fc2;letter-spacing:-0.434px;-webkit-text-stroke:0.22px #2a4fc2;">R 275.00</span>
<span class="t" style="left:90.90px;top:604.07px;font-size:12.2px;font-weight:400;color:#23262e;letter-spacing:0.200px;-webkit-text-stroke:0.22px #23262e;">01/07/2022</span>
<span class="t" style="left:288.00px;top:604.07px;font-size:12.2px;font-weight:400;color:#23262e;letter-spacing:-0.340px;-webkit-text-stroke:0.22px #23262e;">Jbay Wipe Out Store</span>
<span class="t" style="left:467.00px;top:604.07px;font-size:12.2px;font-weight:400;color:#23262e;letter-spacing:-0.150px;-webkit-text-stroke:0.22px #23262e;">Account</span>
<span class="t" style="left:564.00px;top:604.07px;font-size:12.2px;font-weight:700;color:#f7451f;letter-spacing:-0.591px;">Unallocated Income</span>
<span class="t" style="left:703.00px;top:604.07px;font-size:12.2px;font-weight:400;color:#23262e;letter-spacing:0.007px;-webkit-text-stroke:0.22px #23262e;">20220701-0009</span>
<span class="t" style="left:855.75px;top:604.07px;font-size:12.2px;font-weight:400;color:#23262e;letter-spacing:-0.393px;-webkit-text-stroke:0.22px #23262e;">No VAT</span>
<span class="t" style="right:398.00px;margin-right:0.434px;top:604.07px;font-size:12.2px;font-weight:400;color:#23262e;letter-spacing:-0.434px;-webkit-text-stroke:0.22px #23262e;">R 350.00</span>
<span class="t" style="left:90.90px;top:642.47px;font-size:12.2px;font-weight:400;color:#23262e;letter-spacing:0.200px;-webkit-text-stroke:0.22px #23262e;">01/08/2022</span>
<span class="t" style="left:288.00px;top:642.47px;font-size:12.2px;font-weight:400;color:#23262e;letter-spacing:-0.340px;-webkit-text-stroke:0.22px #23262e;">Jbay Wipe Out Store</span>
<span class="t" style="left:467.00px;top:642.47px;font-size:12.2px;font-weight:400;color:#23262e;letter-spacing:-0.150px;-webkit-text-stroke:0.22px #23262e;">Account</span>
<span class="t" style="left:564.00px;top:642.47px;font-size:12.2px;font-weight:700;color:#f7451f;letter-spacing:-0.591px;">Unallocated Income</span>
<span class="t" style="left:703.00px;top:642.47px;font-size:12.2px;font-weight:400;color:#23262e;letter-spacing:0.007px;-webkit-text-stroke:0.22px #23262e;">20220801-0023</span>
<span class="t" style="left:855.75px;top:642.47px;font-size:12.2px;font-weight:400;color:#23262e;letter-spacing:-0.393px;-webkit-text-stroke:0.22px #23262e;">No VAT</span>
<span class="t" style="right:398.00px;margin-right:0.414px;top:642.47px;font-size:12.2px;font-weight:400;color:#23262e;letter-spacing:-0.414px;-webkit-text-stroke:0.22px #23262e;">R 1,395.04</span>
<span class="t" style="left:90.90px;top:680.87px;font-size:12.2px;font-weight:400;color:#23262e;letter-spacing:0.200px;-webkit-text-stroke:0.22px #23262e;">24/08/2022</span>
<span class="t" style="left:288.00px;top:680.87px;font-size:12.2px;font-weight:400;color:#23262e;letter-spacing:-0.340px;-webkit-text-stroke:0.22px #23262e;">Jbay Wipe Out Store</span>
<span class="t" style="left:467.00px;top:680.87px;font-size:12.2px;font-weight:400;color:#23262e;letter-spacing:-0.150px;-webkit-text-stroke:0.22px #23262e;">Account</span>
<span class="t" style="left:564.00px;top:680.87px;font-size:12.2px;font-weight:700;color:#f7451f;letter-spacing:-0.591px;">Unallocated Income</span>
<span class="t" style="left:703.00px;top:680.87px;font-size:12.2px;font-weight:400;color:#23262e;letter-spacing:0.007px;-webkit-text-stroke:0.22px #23262e;">20220824-0001</span>
<span class="t" style="left:855.75px;top:680.87px;font-size:12.2px;font-weight:400;color:#23262e;letter-spacing:-0.393px;-webkit-text-stroke:0.22px #23262e;">No VAT</span>
<span class="t" style="right:398.00px;margin-right:0.414px;top:680.87px;font-size:12.2px;font-weight:400;color:#23262e;letter-spacing:-0.414px;-webkit-text-stroke:0.22px #23262e;">R 6,300.00</span>
<span class="t" style="left:90.90px;top:719.27px;font-size:12.2px;font-weight:400;color:#23262e;letter-spacing:0.200px;-webkit-text-stroke:0.22px #23262e;">01/09/2022</span>
<span class="t" style="left:288.00px;top:719.27px;font-size:12.2px;font-weight:400;color:#23262e;letter-spacing:-0.340px;-webkit-text-stroke:0.22px #23262e;">Jbay Wipe Out Store</span>
<span class="t" style="left:467.00px;top:719.27px;font-size:12.2px;font-weight:400;color:#23262e;letter-spacing:-0.150px;-webkit-text-stroke:0.22px #23262e;">Account</span>
<span class="t" style="left:564.00px;top:719.27px;font-size:12.2px;font-weight:700;color:#f7451f;letter-spacing:-0.591px;">Unallocated Income</span>
<span class="t" style="left:703.00px;top:719.27px;font-size:12.2px;font-weight:400;color:#23262e;letter-spacing:0.007px;-webkit-text-stroke:0.22px #23262e;">20220901-0005</span>
<span class="t" style="left:855.75px;top:719.27px;font-size:12.2px;font-weight:400;color:#23262e;letter-spacing:-0.393px;-webkit-text-stroke:0.22px #23262e;">No VAT</span>
<span class="t" style="right:398.00px;margin-right:0.434px;top:719.27px;font-size:12.2px;font-weight:400;color:#23262e;letter-spacing:-0.434px;-webkit-text-stroke:0.22px #23262e;">R 580.00</span>
<span class="t" style="left:90.90px;top:757.67px;font-size:12.2px;font-weight:400;color:#23262e;letter-spacing:0.200px;-webkit-text-stroke:0.22px #23262e;">01/07/2022</span>
<span class="t" style="left:288.00px;top:757.67px;font-size:12.2px;font-weight:400;color:#23262e;letter-spacing:-0.243px;-webkit-text-stroke:0.22px #23262e;">Louis Munro</span>
<span class="t" style="left:467.00px;top:757.67px;font-size:12.2px;font-weight:400;color:#23262e;letter-spacing:-0.150px;-webkit-text-stroke:0.22px #23262e;">Account</span>
<span class="t" style="left:564.00px;top:757.67px;font-size:12.2px;font-weight:700;color:#f7451f;letter-spacing:-0.591px;">Unallocated Income</span>
<span class="t" style="left:703.00px;top:757.67px;font-size:12.2px;font-weight:400;color:#23262e;letter-spacing:0.007px;-webkit-text-stroke:0.22px #23262e;">20220701-0010</span>
<span class="t" style="left:855.75px;top:757.67px;font-size:12.2px;font-weight:400;color:#23262e;letter-spacing:-0.393px;-webkit-text-stroke:0.22px #23262e;">No VAT</span>
<span class="t" style="right:398.00px;margin-right:0.434px;top:757.67px;font-size:12.2px;font-weight:400;color:#23262e;letter-spacing:-0.434px;-webkit-text-stroke:0.22px #23262e;">R 500.00</span>
<span class="t" style="left:90.90px;top:796.07px;font-size:12.2px;font-weight:400;color:#23262e;letter-spacing:0.200px;-webkit-text-stroke:0.22px #23262e;">01/08/2022</span>
<span class="t" style="left:288.00px;top:796.07px;font-size:12.2px;font-weight:400;color:#23262e;letter-spacing:-0.243px;-webkit-text-stroke:0.22px #23262e;">Louis Munro</span>
<span class="t" style="left:467.00px;top:796.07px;font-size:12.2px;font-weight:400;color:#23262e;letter-spacing:-0.150px;-webkit-text-stroke:0.22px #23262e;">Account</span>
<span class="t" style="left:564.00px;top:796.07px;font-size:12.2px;font-weight:700;color:#f7451f;letter-spacing:-0.591px;">Unallocated Income</span>
<span class="t" style="left:703.00px;top:796.07px;font-size:12.2px;font-weight:400;color:#23262e;letter-spacing:0.007px;-webkit-text-stroke:0.22px #23262e;">20220801-0024</span>
<span class="t" style="left:855.75px;top:796.07px;font-size:12.2px;font-weight:400;color:#23262e;letter-spacing:-0.393px;-webkit-text-stroke:0.22px #23262e;">No VAT</span>
<span class="t" style="right:398.00px;margin-right:0.434px;top:796.07px;font-size:12.2px;font-weight:400;color:#23262e;letter-spacing:-0.434px;-webkit-text-stroke:0.22px #23262e;">R 275.00</span>
<span class="t" style="left:90.90px;top:834.47px;font-size:12.2px;font-weight:400;color:#23262e;letter-spacing:0.200px;-webkit-text-stroke:0.22px #23262e;">19/08/2022</span>
<span class="t" style="left:288.00px;top:834.47px;font-size:12.2px;font-weight:400;color:#23262e;letter-spacing:-0.243px;-webkit-text-stroke:0.22px #23262e;">Louis Munro</span>
<span class="t" style="left:467.00px;top:834.47px;font-size:12.2px;font-weight:400;color:#23262e;letter-spacing:-0.150px;-webkit-text-stroke:0.22px #23262e;">Account</span>
<span class="t" style="left:564.00px;top:834.47px;font-size:12.2px;font-weight:700;color:#f7451f;letter-spacing:-0.591px;">Unallocated Income</span>
<span class="t" style="left:703.00px;top:834.47px;font-size:12.2px;font-weight:400;color:#23262e;letter-spacing:0.007px;-webkit-text-stroke:0.22px #23262e;">20220819-0001</span>
<span class="t" style="left:855.75px;top:834.47px;font-size:12.2px;font-weight:400;color:#23262e;letter-spacing:-0.393px;-webkit-text-stroke:0.22px #23262e;">No VAT</span>
<span class="t" style="right:398.00px;margin-right:0.434px;top:834.47px;font-size:12.2px;font-weight:400;color:#23262e;letter-spacing:-0.434px;-webkit-text-stroke:0.22px #23262e;">R 750.00</span>
<span class="t" style="left:90.90px;top:872.87px;font-size:12.2px;font-weight:400;color:#23262e;letter-spacing:0.200px;-webkit-text-stroke:0.22px #23262e;">01/09/2022</span>
<span class="t" style="left:288.00px;top:872.87px;font-size:12.2px;font-weight:400;color:#23262e;letter-spacing:-0.243px;-webkit-text-stroke:0.22px #23262e;">Louis Munro</span>
<span class="t" style="left:467.00px;top:872.87px;font-size:12.2px;font-weight:400;color:#23262e;letter-spacing:-0.150px;-webkit-text-stroke:0.22px #23262e;">Account</span>
<span class="t" style="left:564.00px;top:872.87px;font-size:12.2px;font-weight:700;color:#f7451f;letter-spacing:-0.591px;">Unallocated Income</span>
<span class="t" style="left:703.00px;top:872.87px;font-size:12.2px;font-weight:400;color:#23262e;letter-spacing:0.007px;-webkit-text-stroke:0.22px #23262e;">20220901-0006</span>
<span class="t" style="left:855.75px;top:872.87px;font-size:12.2px;font-weight:400;color:#23262e;letter-spacing:-0.393px;-webkit-text-stroke:0.22px #23262e;">No VAT</span>
<span class="t" style="right:398.00px;margin-right:0.434px;top:872.87px;font-size:12.2px;font-weight:400;color:#23262e;letter-spacing:-0.434px;-webkit-text-stroke:0.22px #23262e;">R 580.00</span>
<span class="t" style="left:90.90px;top:911.27px;font-size:12.2px;font-weight:400;color:#23262e;letter-spacing:0.200px;-webkit-text-stroke:0.22px #23262e;">01/07/2022</span>
<span class="t" style="left:288.00px;top:911.27px;font-size:12.2px;font-weight:400;color:#23262e;letter-spacing:-0.226px;-webkit-text-stroke:0.22px #23262e;">Low tide</span>
<span class="t" style="left:467.00px;top:911.27px;font-size:12.2px;font-weight:400;color:#23262e;letter-spacing:-0.150px;-webkit-text-stroke:0.22px #23262e;">Account</span>
<span class="t" style="left:564.00px;top:911.27px;font-size:12.2px;font-weight:700;color:#f7451f;letter-spacing:-0.591px;">Unallocated Income</span>
<span class="t" style="left:703.00px;top:911.27px;font-size:12.2px;font-weight:400;color:#23262e;letter-spacing:0.077px;-webkit-text-stroke:0.22px #23262e;">20220701-0011</span>
<span class="t" style="left:855.75px;top:911.27px;font-size:12.2px;font-weight:400;color:#23262e;letter-spacing:-0.393px;-webkit-text-stroke:0.22px #23262e;">No VAT</span>
<span class="t" style="right:398.00px;margin-right:0.434px;top:911.27px;font-size:12.2px;font-weight:400;color:#23262e;letter-spacing:-0.434px;-webkit-text-stroke:0.22px #23262e;">R 500.00</span>
<div style="position:absolute;left:0;top:919px;width:1536px;height:41px;background:#000"></div>
<div style="position:absolute;left:0;top:0;width:1536px;height:41px;background:#000"></div>
<svg style="left:190px;top:170px" width="70" height="60" viewBox="190 170 70 60">
<path d="M212.8 181.3 C215 181.3 216.3 183 216.6 185 L218.6 192.8 C219.5 191 221 190.6 222.2 190.7 C223.8 190.8 224.8 192 225 193.6 C225.6 192.3 227 191.7 228.4 191.8 C230 191.9 231.3 193 231.6 194.6 C232.2 193.8 233.6 193.4 235 193.6 C237 193.9 238 195.2 238 197 L237.6 204 C237.2 208 235 211.5 233 214 L231.4 218 L216.8 218 L215.6 215.3 C212 211 207 205 204.2 201 C202.8 199 203.4 197 205 196.2 C206.6 195.5 208.4 196.2 209.6 197.6 L212.2 200.6 L209.6 185.6 C209.2 183 210.6 181.3 212.8 181.3 Z" fill="#fff" stroke="#000" stroke-width="1.9" stroke-linejoin="round"/>
<path d="M218.6 192.8 L219 197.6 M225 193.6 L225.3 197.6 M231.6 194.6 L231.9 197.6" stroke="#000" stroke-width="1.5" stroke-linecap="round" fill="none"/>
<path d="M220.4 203.2 V212 M225.25 203.2 V212 M230.1 203.2 V212" stroke="#000" stroke-width="1.6" stroke-linecap="round"/></svg>
</div></body></html>
